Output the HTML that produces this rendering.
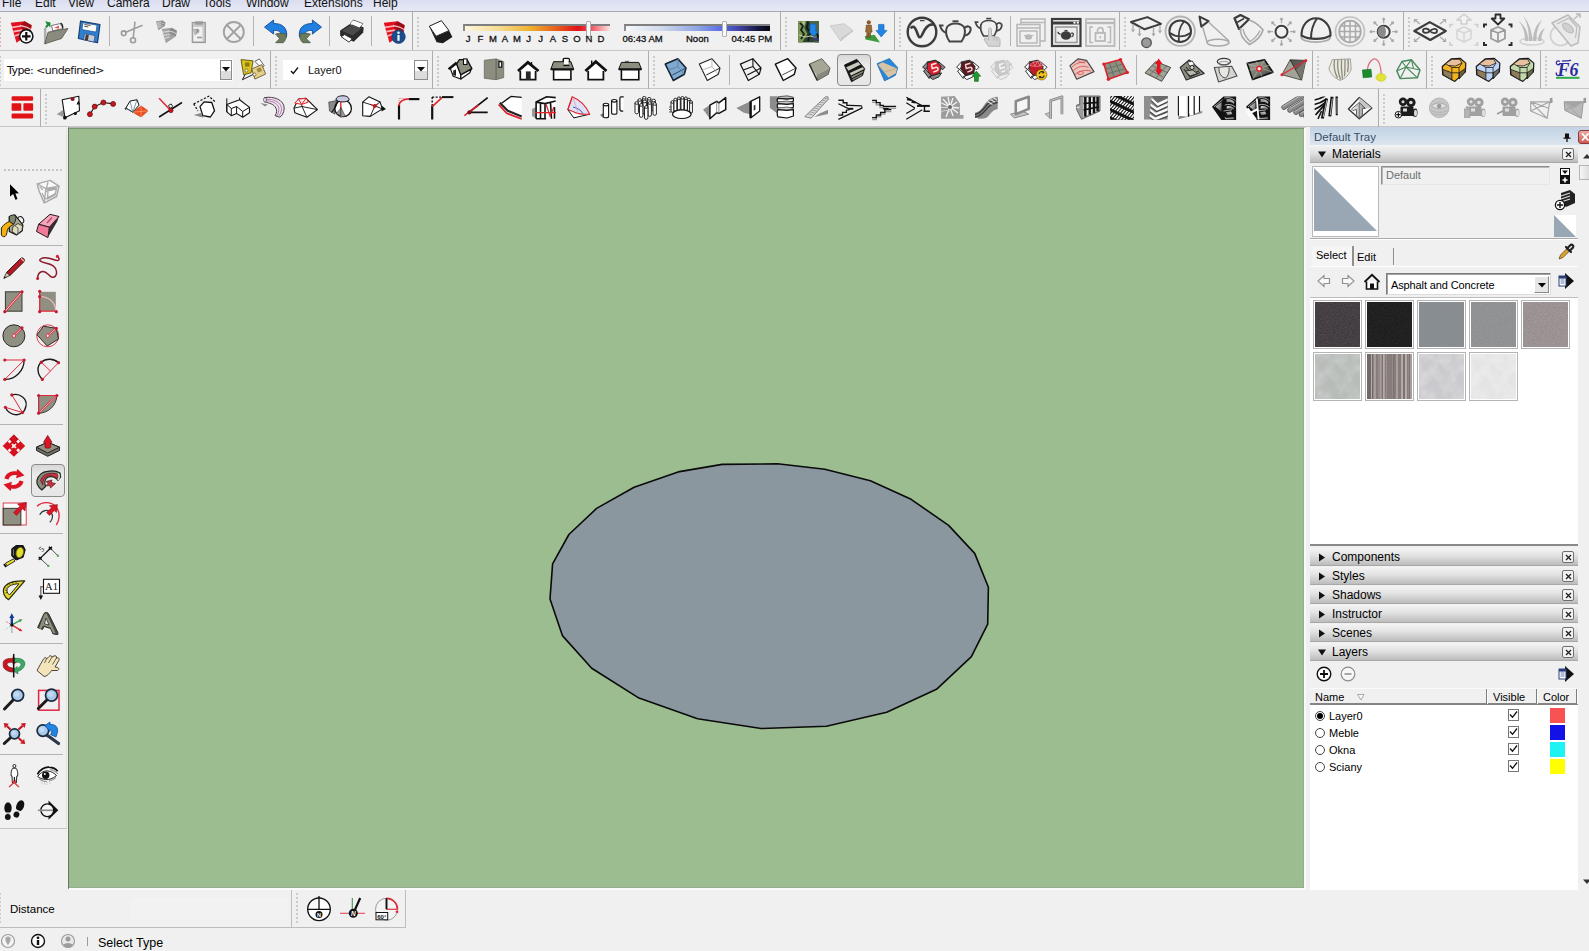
<!DOCTYPE html>
<html lang="en"><head><meta charset="utf-8"><title>SketchUp</title>
<style>
*{box-sizing:border-box;margin:0;padding:0}
html,body{width:1589px;height:951px;overflow:hidden;background:#f0f0f0;font-family:"Liberation Sans",sans-serif;font-size:12px;color:#000}
.abs{position:absolute}
#menubar{position:absolute;left:0;top:0;width:1589px;height:12px;background:linear-gradient(#d9ddef,#e7eaf5);overflow:hidden;border-bottom:1px solid #a4a7b6}
#menubar span{position:absolute;top:-4px;font-size:12px;line-height:15px;color:#111;font-family:"Liberation Sans",sans-serif}
.hl{position:absolute;height:1px;background:#c6c6c6}
.vl{position:absolute;width:1px;background:#adadad}
.sep{position:absolute;width:1px;background:#b4b4b4}
.grip{position:absolute;width:2px;background:repeating-linear-gradient(#cbcbcb 0 2px,transparent 2px 4px)}
.ic{position:absolute;width:24px;height:24px;overflow:visible}
.sel{position:absolute;border:1px solid #8a8a8a;border-radius:4px;background:linear-gradient(#d8d8d8,#ebebeb 35%,#e6e6e6)}
#viewport{position:absolute;left:68px;top:127px;width:1238px;height:763px;background:#9bbd90;border-left:1px solid #65785f;border-top:1px solid #b4b8b2;border-right:2px solid #f9fbf8;border-bottom:2px solid #f9fbf8;box-shadow:inset 0 1px 0 #7b9474,inset -1px -1px 0 #96ae8f}
.tx{position:absolute;white-space:nowrap}

#tray{position:absolute;left:1310px;top:127px;width:279px;height:762px;font-family:"Liberation Sans",sans-serif;font-size:11px}
.tt{font-family:"Liberation Sans",sans-serif}
#traytitle{position:absolute;left:0;top:0;width:279px;height:18px;background:linear-gradient(#c3d3e4,#dbe5ef)}
.hdr{position:absolute;left:0;width:268px;height:18px;background:linear-gradient(#f4f4f4 0%,#e2e2e2 45%,#bcbcbc 100%);border-bottom:1px solid #a8a8a8}
.hdr .t{position:absolute;left:22px;top:1px;font-size:12px;line-height:16px;font-family:"Liberation Sans",sans-serif;letter-spacing:0}
.hdr .x{position:absolute;left:252px;top:3px;width:12px;height:12px;border:1px solid #707070;border-radius:2px;background:#f2f2f2}
.hdr svg{position:absolute}
.sw{position:absolute;width:49px;height:49px;border:1px solid #b4b4b4;padding:1px;background:#fff}

.lay{position:absolute;left:19px;font-size:11px;line-height:13px;font-family:"Liberation Sans",sans-serif}
.rad{position:absolute;left:5px;width:10px;height:10px;border:1px solid #444;border-radius:50%;background:#fff}
.chk{position:absolute;left:198px;width:11px;height:12px;border:1px solid #777;background:#fff}
.col{position:absolute;left:240px;width:15px;height:15px}
</style></head>
<body>
<div id="menubar"><span style="left:2px">File</span><span style="left:35px">Edit</span><span style="left:68px">View</span><span style="left:107px">Camera</span><span style="left:162px">Draw</span><span style="left:203px">Tools</span><span style="left:246px">Window</span><span style="left:304px">Extensions</span><span style="left:373px">Help</span></div>
<div class="hl" style="left:0;top:50px;width:1589px"></div><div class="hl" style="left:0;top:88px;width:1589px"></div><div class="hl" style="left:0;top:126px;width:1589px"></div><div class="vl" style="left:412px;top:12px;height:38px"></div><div class="grip" style="left:417px;top:17px;height:31px"></div><div class="vl" style="left:780px;top:12px;height:38px"></div><div class="grip" style="left:785px;top:17px;height:31px"></div><div class="vl" style="left:894px;top:12px;height:38px"></div><div class="grip" style="left:899px;top:17px;height:31px"></div><div class="vl" style="left:1119px;top:12px;height:38px"></div><div class="grip" style="left:1124px;top:17px;height:31px"></div><div class="vl" style="left:1403px;top:12px;height:38px"></div><div class="grip" style="left:1408px;top:17px;height:31px"></div><div class="vl" style="left:270px;top:51px;height:38px"></div><div class="grip" style="left:275px;top:56px;height:31px"></div><div class="vl" style="left:432px;top:51px;height:38px"></div><div class="grip" style="left:437px;top:56px;height:31px"></div><div class="vl" style="left:648px;top:51px;height:38px"></div><div class="grip" style="left:653px;top:56px;height:31px"></div><div class="vl" style="left:906px;top:51px;height:38px"></div><div class="grip" style="left:911px;top:56px;height:31px"></div><div class="vl" style="left:1055px;top:51px;height:38px"></div><div class="grip" style="left:1060px;top:56px;height:31px"></div><div class="vl" style="left:1312px;top:51px;height:38px"></div><div class="grip" style="left:1317px;top:56px;height:31px"></div><div class="vl" style="left:1426px;top:51px;height:38px"></div><div class="grip" style="left:1431px;top:56px;height:31px"></div><div class="vl" style="left:1540px;top:51px;height:38px"></div><div class="grip" style="left:1545px;top:56px;height:31px"></div><div class="vl" style="left:40px;top:89px;height:38px"></div><div class="grip" style="left:45px;top:94px;height:31px"></div><div class="vl" style="left:1378px;top:89px;height:38px"></div><div class="grip" style="left:1383px;top:94px;height:31px"></div><div class="grip" style="left:0px;top:17px;height:31px;width:1px;background:repeating-linear-gradient(#e0b4b4 0 2px,transparent 2px 4px)"></div><div class="grip" style="left:0px;top:56px;height:31px;width:1px"></div><div class="sep" style="left:109px;top:16px;height:30px"></div><div class="sep" style="left:253px;top:16px;height:30px"></div><div class="sep" style="left:329px;top:16px;height:30px"></div><div class="sep" style="left:371px;top:16px;height:30px"></div><div class="sep" style="left:1010px;top:16px;height:30px"></div><div class="sep" style="left:729px;top:55px;height:30px"></div><div class="sep" style="left:1136px;top:55px;height:30px"></div><div class="abs" style="left:463px;top:24px;width:147px;height:7px;background:linear-gradient(90deg,#fdf6e0 0%,#f6d98a 25%,#eeb22c 45%,#e8641c 62%,#e01018 78%,#f06068 88%,#fbe4e4 100%);border-top:2px solid #7f7f7f;border-left:2px solid #8a8a8a"></div><div class="abs" style="left:586px;top:21px;width:5px;height:16px;background:#fafafa;border:1px solid #b0b0b0;border-radius:1px"></div><span class="tx" style="left:468px;top:33px;width:12px;margin-left:-6px;text-align:center;font-size:9.500px;line-height:11px;color:#111;-webkit-text-stroke:.3px #111">J</span><span class="tx" style="left:480.5px;top:33px;width:12px;margin-left:-6px;text-align:center;font-size:9.500px;line-height:11px;color:#111;-webkit-text-stroke:.3px #111">F</span><span class="tx" style="left:493px;top:33px;width:12px;margin-left:-6px;text-align:center;font-size:9.500px;line-height:11px;color:#111;-webkit-text-stroke:.3px #111">M</span><span class="tx" style="left:505px;top:33px;width:12px;margin-left:-6px;text-align:center;font-size:9.500px;line-height:11px;color:#111;-webkit-text-stroke:.3px #111">A</span><span class="tx" style="left:517px;top:33px;width:12px;margin-left:-6px;text-align:center;font-size:9.500px;line-height:11px;color:#111;-webkit-text-stroke:.3px #111">M</span><span class="tx" style="left:528.5px;top:33px;width:12px;margin-left:-6px;text-align:center;font-size:9.500px;line-height:11px;color:#111;-webkit-text-stroke:.3px #111">J</span><span class="tx" style="left:540.5px;top:33px;width:12px;margin-left:-6px;text-align:center;font-size:9.500px;line-height:11px;color:#111;-webkit-text-stroke:.3px #111">J</span><span class="tx" style="left:553px;top:33px;width:12px;margin-left:-6px;text-align:center;font-size:9.500px;line-height:11px;color:#111;-webkit-text-stroke:.3px #111">A</span><span class="tx" style="left:565px;top:33px;width:12px;margin-left:-6px;text-align:center;font-size:9.500px;line-height:11px;color:#111;-webkit-text-stroke:.3px #111">S</span><span class="tx" style="left:577px;top:33px;width:12px;margin-left:-6px;text-align:center;font-size:9.500px;line-height:11px;color:#111;-webkit-text-stroke:.3px #111">O</span><span class="tx" style="left:589px;top:33px;width:12px;margin-left:-6px;text-align:center;font-size:9.500px;line-height:11px;color:#111;-webkit-text-stroke:.3px #111">N</span><span class="tx" style="left:601px;top:33px;width:12px;margin-left:-6px;text-align:center;font-size:9.500px;line-height:11px;color:#111;-webkit-text-stroke:.3px #111">D</span><div class="abs" style="left:624px;top:24px;width:146px;height:7px;background:linear-gradient(90deg,#f6f8fc 0%,#cfd9ea 25%,#8ea4e4 50%,#5a6fe8 66%,#3c3c9c 80%,#16163c 92%,#050510 100%);border-top:2px solid #7f7f7f;border-left:2px solid #8a8a8a"></div><div class="abs" style="left:722px;top:21px;width:5px;height:16px;background:#fafafa;border:1px solid #b0b0b0;border-radius:1px"></div><span class="tx" style="left:622.5px;top:33px;font-size:9.500px;line-height:11px;color:#111;-webkit-text-stroke:.3px #111">06:43 AM</span><span class="tx" style="left:686px;top:33px;font-size:9.500px;line-height:11px;color:#111;-webkit-text-stroke:.3px #111">Noon</span><span class="tx" style="left:731.5px;top:33px;font-size:9.500px;line-height:11px;color:#111;-webkit-text-stroke:.3px #111">04:45 PM</span><svg class="ic" style="left:9px;top:20px" viewBox="0 0 24 24"><g transform="translate(0,0) scale(1)"><path d="M1.800 2.700L15.600 1.200 22.600 5.300 21.400 13 7.500 22.700z" fill="#e3101f"/><path d="M15.600 1.200L22.600 5.300 21.400 13 14 9.500 11 5.500z" fill="#9c0d18"/><path d="M3 7.300l9-1.300M4.300 11.600l8.500-1.500M5.600 16l7-2.500" stroke="#f6b9bb" stroke-width="1.700" fill="none"/><path d="M11 5.500l6.500 1.500 4.600 2.500" stroke="#f6b9bb" stroke-width="1.300" fill="none"/></g><circle cx="17.300" cy="16.300" r="6.600" fill="#fff" stroke="#111" stroke-width="1.500"/><path d="M17.300 12v8.600M13 16.300h8.600" stroke="#111" stroke-width="2.200"/></svg><svg class="ic" style="left:43px;top:20px" viewBox="0 0 24 24"><path d="M1.400 8.500l1.600-0.500v15.800l-1.600 0z" fill="#b9b9b9" stroke="#8a8a8a" stroke-width=".5"/><path d="M8.500 5.500l9-2 2.300 5-10 2.400z" fill="#fff" stroke="#555" stroke-width=".8"/><path d="M11 8l5-2.500v3z" fill="#e8505a"/><path d="M17.500 3.500c1.500 0 2.300 2.500 2.300 5" stroke="#222" stroke-width="1.300" fill="none"/><path d="M5 12.200L25 8.500 18.500 18.500 1.800 23.800z" fill="#8b8a7e" stroke="#54534a" stroke-width=".8"/><path d="M1.800 1.500l5.500 0.500 0.500 5-2-1.500-1.500 2.500-1.800-1 1.500-2.500z" fill="#1f8a3a" transform="rotate(8 4 4)"/></svg><svg class="ic" style="left:77px;top:20px" viewBox="0 0 24 24"><path d="M3.500 1.200L23 4.500 20.500 22.700 1.400 18.500z" fill="#2f80d3" stroke="#173f73" stroke-width="1.200" stroke-linejoin="round"/><path d="M6 2.800L20 5.200 19 12 5 9.500z" fill="#fff" stroke="#173f73" stroke-width=".6"/><path d="M7.500 4.500l6 1M7.300 6.300l4 .7" stroke="#3b3b3b" stroke-width=".9"/><path d="M7.500 13.500l10.500 2-1 6.500-10.400-2.200z" fill="#c9cbd6" stroke="#173f73" stroke-width=".6"/><path d="M8.800 14.200l3 .6-.9 5.800-3-.6z" fill="#3d3d3d"/></svg><svg class="ic" style="left:119px;top:20px" viewBox="0 0 24 24"><circle cx="4.700" cy="13.200" r="2.300" fill="none" stroke="#9c9c9c" stroke-width="1.600"/><circle cx="14" cy="20.300" r="2.500" fill="none" stroke="#9c9c9c" stroke-width="1.600"/><path d="M6.800 12.300L23.500 5.300M14.200 17.800L16 1.600" stroke="#9c9c9c" stroke-width="1.500" fill="none"/></svg><svg class="ic" style="left:153px;top:20px" viewBox="0 0 24 24"><g transform="translate(2,0) scale(0.46)"><path d="M1.800 2.700L15.600 1.200 22.600 5.300 21.400 13 7.500 22.700z" fill="#a3a3a3"/><path d="M15.600 1.200L22.600 5.300 21.400 13 14 9.500 11 5.500z" fill="#8a8a8a"/><path d="M3 7.300l9-1.300M4.300 11.600l8.500-1.500M5.600 16l7-2.500" stroke="#d9d9d9" stroke-width="1.700" fill="none"/><path d="M11 5.500l6.500 1.500 4.600 2.500" stroke="#d9d9d9" stroke-width="1.300" fill="none"/></g><g transform="translate(7.5,7) scale(0.72)"><path d="M1.800 2.700L15.600 1.200 22.600 5.300 21.400 13 7.500 22.700z" fill="#a3a3a3"/><path d="M15.600 1.200L22.600 5.300 21.400 13 14 9.500 11 5.500z" fill="#8a8a8a"/><path d="M3 7.300l9-1.300M4.300 11.600l8.500-1.500M5.600 16l7-2.500" stroke="#d9d9d9" stroke-width="1.700" fill="none"/><path d="M11 5.500l6.500 1.500 4.600 2.500" stroke="#d9d9d9" stroke-width="1.300" fill="none"/></g></svg><svg class="ic" style="left:187px;top:20px" viewBox="0 0 24 24"><rect x="5.300" y="2.500" width="13" height="20" fill="#c9c9c9" stroke="#9a9a9a" stroke-width="1.200"/><rect x="6.500" y="7" width="9" height="14" fill="#f0f0f0"/><rect x="8" y="1.300" width="8" height="3.400" fill="#9a9a9a"/><g transform="translate(5.5,8.5) scale(0.3)"><path d="M1.800 2.700L15.600 1.200 22.600 5.300 21.400 13 7.500 22.700z" fill="#a3a3a3"/><path d="M15.600 1.200L22.600 5.300 21.400 13 14 9.500 11 5.500z" fill="#8a8a8a"/><path d="M3 7.300l9-1.300M4.300 11.600l8.500-1.500M5.600 16l7-2.500" stroke="#e0e0e0" stroke-width="1.700" fill="none"/><path d="M11 5.500l6.500 1.500 4.600 2.500" stroke="#e0e0e0" stroke-width="1.300" fill="none"/></g><path d="M10 17.500h5" stroke="#9a9a9a" stroke-width="1.600"/></svg><svg class="ic" style="left:221px;top:20px" viewBox="0 0 24 24"><circle cx="12.800" cy="12" r="10" fill="none" stroke="#a2a2a2" stroke-width="1.900"/><path d="M5.800 5L19.800 19M19.800 5L5.800 19" stroke="#a2a2a2" stroke-width="1.900"/></svg><svg class="ic" style="left:264px;top:20px" viewBox="0 0 24 24"><path d="M9.600 0L0.500 7.100 9.600 14.100V10.400C14 10 16.500 11.500 17.500 14.500L22.500 17C24 8 18 3.200 9.600 3.600z" fill="#1f80e2" stroke="#0e4c9c" stroke-width=".9" stroke-linejoin="round"/><path d="M11.600 14.100C15 13 19 13.200 21.500 13.800 23.300 17 21.500 20.500 19.200 22.700L11.600 22.700 15.600 18.700z" fill="#6c7a5c" stroke="#3f4a38" stroke-width=".7"/></svg><svg class="ic" style="left:298px;top:20px" viewBox="0 0 24 24"><g transform="translate(24,0) scale(-1,1)"><path d="M9.600 0L0.500 7.100 9.600 14.100V10.400C14 10 16.500 11.500 17.500 14.500L22.500 17C24 8 18 3.200 9.600 3.600z" fill="#1f80e2" stroke="#0e4c9c" stroke-width=".9" stroke-linejoin="round"/><path d="M11.600 14.100C15 13 19 13.200 21.500 13.800 23.300 17 21.500 20.500 19.200 22.700L11.600 22.700 15.600 18.700z" fill="#6c7a5c" stroke="#3f4a38" stroke-width=".7"/></g></svg><svg class="ic" style="left:339px;top:20px" viewBox="0 0 24 24"><path d="M11.100 4.100L14.200 0 23.700 3.600 20.700 8.100z" fill="#fff" stroke="#333" stroke-width=".8"/><path d="M1.100 10.600L13.200 2.600 24.700 7.600 24.200 12.600 14.700 21.700 1.100 15.700z" fill="#2b2b2b"/><path d="M11.100 4.300L14 0.600 23.200 4 20.500 7.800z" fill="#fff"/><path d="M3 10.800L13 4.500 22.500 8.500 13.500 15.500z" fill="#4a4a4a"/><path d="M2.100 16.700L5.600 14.600 13.200 18.700 10.100 22.200z" fill="#fff" stroke="#222" stroke-width=".9"/></svg><svg class="ic" style="left:382px;top:20px" viewBox="0 0 24 24"><g transform="translate(0,0) scale(1)"><path d="M1.800 2.700L15.600 1.200 22.600 5.300 21.400 13 7.500 22.700z" fill="#e3101f"/><path d="M15.600 1.200L22.600 5.300 21.400 13 14 9.500 11 5.500z" fill="#9c0d18"/><path d="M3 7.300l9-1.300M4.300 11.600l8.500-1.500M5.600 16l7-2.500" stroke="#f6b9bb" stroke-width="1.700" fill="none"/><path d="M11 5.500l6.500 1.500 4.600 2.500" stroke="#f6b9bb" stroke-width="1.300" fill="none"/></g><circle cx="16.500" cy="16.700" r="6.800" fill="#1c4a8c" stroke="#123a6e" stroke-width=".6"/><circle cx="16.500" cy="12.800" r="1.300" fill="#dff"/><path d="M16.500 15v5.800" stroke="#e6ffff" stroke-width="2.200"/></svg><svg class="ic" style="left:429px;top:20px" viewBox="0 0 24 24"><path d="M0.100 6.200L7 16.600 20.200 10.700 23.400 17 13.900 23.200 7.600 22.300z" fill="#1d1d1d"/><path d="M0.300 6.200L12.400 0.700 20 10.600 7.100 16.300z" fill="#fff" stroke="#1d1d1d" stroke-width="1"/></svg><svg class="ic" style="left:796px;top:20px" viewBox="0 0 24 24"><rect x="2.300" y="1" width="20.700" height="21.400" fill="#2f4230"/><path d="M2.300 1h8l-2 7 3 6-5 8.400h-4z" fill="#7c9a52"/><path d="M13 1l3 6-2 8 5 7.400h4V1z" fill="#4d6848"/><path d="M4 3l3 3-2 4 3 4-3 5M12 2l-1 6 3 5-2 8M20 12l2 4-1 5" stroke="#111a14" stroke-width="1.700" fill="none"/><path d="M3 15l6 2 6-1 7 3" stroke="#cfd8c0" stroke-width=".9" fill="none"/><path d="M14 17l5 4h4v-3z" fill="#3a3a6a"/><path d="M6 1.500l3 .5-1 4z" fill="#b8c890"/><path d="M14 4h5.800v7.600h2.700L17.600 16.400 12.800 11.600H14z" fill="#1f86e6" stroke="#1560b0" stroke-width=".6"/></svg><svg class="ic" style="left:830px;top:20px" viewBox="0 0 24 24"><path d="M0.200 5.800L14 3.700 23 10.600 10.600 21z" fill="#d9d9d9" stroke="#c4c4c4" stroke-width=".8"/><path d="M10.600 21l1.500-3 10.900-7.400" fill="none" stroke="#bdbdbd" stroke-width="1"/></svg><svg class="ic" style="left:863px;top:20px" viewBox="0 0 24 24"><path d="M1.800 16.200L11.500 14.800 17 22.400 2.500 19.600z" fill="#3c9a3c"/><circle cx="5.800" cy="2.300" r="2.100" fill="#8a5a2c"/><path d="M3.300 5h5l.8 7-1.300.3-.5 5H5.800l-.2-4-.6 4H3.500l.4-5L2.600 12z" fill="#9a6a34" stroke="#5a3a18" stroke-width=".5"/><path d="M15.500 4.400h5.500v6h3L18.200 16.900 12.900 10.400h2.600z" fill="#1f86e6" stroke="#1560b0" stroke-width=".6"/></svg><svg class="ic" style="left:909px;top:20px" viewBox="0 0 24 24"><circle cx="13" cy="12" r="14.300" fill="none" stroke="#3c3c3c" stroke-width="2.400"/><path d="M2.500 7.500C5 5 7 9 9 15c1 3 2.500 3 4 0 2.500-6 5.500-11.500 11.500-10.500" fill="none" stroke="#3c3c3c" stroke-width="2.600" stroke-linecap="round"/><path d="M11 0.600h4.500" stroke="#3c3c3c" stroke-width="1.300"/></svg><svg class="ic" style="left:943px;top:20px" viewBox="0 0 24 24"><path d="M3.500 8.500C4 5.500 8 3.500 12.500 3.500S21 5.500 21.500 8.500C23 13 20.500 18.500 18.500 21.500H6.500C4.500 18.500 2 13 3.500 8.500z" fill="none" stroke="#444" stroke-width="2"/><path d="M9.500 1.200h6" stroke="#444" stroke-width="1.800"/><path d="M3.500 13C0 12-2 9-3 5.500h3.500" fill="none" stroke="#444" stroke-width="2"/><path d="M21.500 8c3-3 7-1.500 6 2.500-.6 2.500-3 4.500-5.500 5" fill="none" stroke="#444" stroke-width="2"/></svg><svg class="ic" style="left:977px;top:20px" viewBox="0 0 24 24"><g transform="translate(1,-2.500) scale(.86)"><path d="M3.500 8.500C4 5.500 8 3.500 12.500 3.500S21 5.500 21.500 8.500C23 13 20.500 18.500 18.500 21.500H6.500C4.500 18.500 2 13 3.500 8.500z" fill="none" stroke="#444" stroke-width="2"/><path d="M9.500 1.200h6" stroke="#444" stroke-width="1.800"/><path d="M3.500 13C0 12-2 9-3 5.500h3.500" fill="none" stroke="#444" stroke-width="2"/><path d="M21.500 8c3-3 7-1.500 6 2.500-.6 2.500-3 4.500-5.500 5" fill="none" stroke="#444" stroke-width="2"/></g><path d="M11.500 9.500c0-2 3-2 3 0v6.500l6 1.200c2 .4 2.500 1.500 2.500 3.500v5.500h-11.500l-4-6c-1-1.800.8-3 2.200-1.800l1.800 1.800z" fill="#d4d4d4" stroke="#b4b4b4" stroke-width="1"/><path d="M17 16.500v4M20 17.200v3.600" stroke="#b4b4b4" stroke-width="1"/></svg><svg class="ic" style="left:1020px;top:20px" viewBox="0 0 24 24"><rect x="1" y="-1" width="24" height="22" fill="#f0f0f0" stroke="#b9b9b9" stroke-width="1.600"/><path d="M1 2.500h24" stroke="#b9b9b9" stroke-width="1.500"/><rect x="-3" y="4.500" width="23" height="21.500" fill="#f0f0f0" stroke="#b9b9b9" stroke-width="1.600"/><path d="M-3 8h23" stroke="#b9b9b9" stroke-width="1.600"/><rect x="0" y="11" width="17" height="12" fill="none" stroke="#b9b9b9" stroke-width="1.500"/><ellipse cx="8.500" cy="17" rx="3.600" ry="2.800" fill="#b9b9b9"/><path d="M4 15.500h9.500" stroke="#b9b9b9" stroke-width="1"/></svg><svg class="ic" style="left:1054px;top:20px" viewBox="0 0 24 24"><rect x="-2" y="-1" width="28.500" height="27" fill="#f0f0f0" stroke="#3c3c3c" stroke-width="2.200"/><path d="M-2 3h28.500" stroke="#3c3c3c" stroke-width="3"/><rect x="1.500" y="7" width="21.500" height="15.500" fill="#ededed" stroke="#9a9a9a" stroke-width="1.600"/><ellipse cx="12" cy="15.500" rx="5.200" ry="4.200" fill="#3c3c3c"/><path d="M6.500 14c-1.500 0-2.500-1-2.500-2.200M17 13.500c2.500-1.500 3.500 2 0.500 3.500" stroke="#3c3c3c" stroke-width="1.300" fill="none"/><path d="M10.500 10.600h3" stroke="#3c3c3c" stroke-width="1.300"/><rect x="19.500" y="1.800" width="2" height="1.800" fill="#fff"/><rect x="22.800" y="1.800" width="2" height="1.800" fill="#fff"/></svg><svg class="ic" style="left:1088px;top:20px" viewBox="0 0 24 24"><rect x="-2" y="-1" width="28.500" height="27" fill="#f0f0f0" stroke="#b9b9b9" stroke-width="1.800"/><path d="M-2 3h28.500" stroke="#b9b9b9" stroke-width="2.400"/><path d="M5 7H2v15.500h3M19.500 7h3v15.500h-3" fill="none" stroke="#b9b9b9" stroke-width="1.500"/><rect x="7.500" y="13" width="9.500" height="8" fill="none" stroke="#b9b9b9" stroke-width="1.800"/><path d="M9.500 13v-2.500a2.800 2.800 0 015.600 0V13" fill="none" stroke="#b9b9b9" stroke-width="1.700"/><path d="M12.300 16v2.500" stroke="#b9b9b9" stroke-width="1.500"/></svg><svg class="ic" style="left:1133px;top:20px" viewBox="0 0 24 24"><path d="M-2 2L14.400 -2.900 28 3.900 11.600 9.300z" fill="none" stroke="#3c3c3c" stroke-width="2" stroke-linejoin="round"/><path d="M0 4v7M6.500 7v8M20.500 7v8M27 5v7" stroke="#a9a9a9" stroke-width="1.300"/><path d="M-1.500 9.500l1.500 2 1.500-2M5 13.500l1.500 2 1.500-2M19 13.500l1.500 2 1.500-2M25.500 10.500l1.500 2 1.500-2" fill="none" stroke="#a9a9a9" stroke-width="1.200"/><circle cx="13.500" cy="22.700" r="4.800" fill="#9a9a9a" stroke="#555" stroke-width="1.300"/></svg><svg class="ic" style="left:1168px;top:20px" viewBox="0 0 24 24"><circle cx="12.200" cy="11.200" r="14.700" fill="none" stroke="#b4b4b4" stroke-width="1.900"/><circle cx="12.200" cy="11.200" r="10.800" fill="none" stroke="#3c3c3c" stroke-width="2"/><path d="M16 1.500C12 6 10 14 11 22M2 13c6 4.500 14 4.500 20.500 0" fill="none" stroke="#3c3c3c" stroke-width="1.800"/></svg><svg class="ic" style="left:1201px;top:20px" viewBox="0 0 24 24"><path d="M-1.500 -3.400L7.600 1.100 0.300 6.600z" fill="none" stroke="#3c3c3c" stroke-width="2" stroke-linejoin="round"/><path d="M1.500 6.500L6 22M7.500 2L28 21" stroke="#a9a9a9" stroke-width="1.400" fill="none"/><ellipse cx="17" cy="22.600" rx="11" ry="3.300" fill="none" stroke="#a9a9a9" stroke-width="1.500"/></svg><svg class="ic" style="left:1235px;top:20px" viewBox="0 0 24 24"><path d="M-0.500 -1.700L5.500 -5 14 -0.700 4 9z" fill="none" stroke="#3c3c3c" stroke-width="2.200" stroke-linejoin="round"/><path d="M2 2.500l7-4" stroke="#3c3c3c" stroke-width="1.600"/><path d="M5.500 8c-1 6 3 12 9 16.500 6-3 11.500-8 13.500-14.500C24 5 19 1.500 14 0" fill="none" stroke="#a9a9a9" stroke-width="1.700"/><path d="M8 9c1 5 4 9.500 7 12.500 4-2.500 8-6.500 10-11" fill="none" stroke="#a9a9a9" stroke-width="1.300"/></svg><svg class="ic" style="left:1270px;top:20px" viewBox="0 0 24 24"><path d="M20.0 11.7L25.5 11.7M25.5 11.7L23.2 12.9M25.5 11.7L23.2 10.5M17.5 17.7L21.4 21.6M21.4 21.6L18.9 20.9M21.4 21.6L20.7 19.1M11.5 20.2L11.5 25.7M11.5 25.7L10.3 23.4M11.5 25.7L12.7 23.4M5.5 17.7L1.6 21.6M1.6 21.6L2.3 19.1M1.6 21.6L4.1 20.9M3.0 11.7L-2.5 11.7M-2.5 11.7L-0.2 10.5M-2.5 11.7L-0.2 12.9M5.5 5.7L1.6 1.8M1.6 1.8L4.1 2.5M1.6 1.8L2.3 4.3M11.5 3.2L11.5 -2.3M11.5 -2.3L12.7 -0.0M11.5 -2.3L10.3 -0.0M17.5 5.7L21.4 1.8M21.4 1.8L20.7 4.3M21.4 1.8L18.9 2.5" stroke="#a9a9a9" stroke-width="1.3" fill="none"/><circle cx="11.500" cy="11.700" r="6" fill="none" stroke="#3c3c3c" stroke-width="2"/></svg><svg class="ic" style="left:1303px;top:20px" viewBox="0 0 24 24"><ellipse cx="12.800" cy="17.500" rx="14.500" ry="4.600" fill="none" stroke="#a9a9a9" stroke-width="1.700"/><path d="M-1.500 15.500C-1.500 5 5 -1.800 13 -1.800S28 6 27.500 15.500C20 20 6 20 -1.500 15.500z" fill="#f0f0f0" stroke="#3c3c3c" stroke-width="2.100"/><path d="M14 -1.500C10 4 8 11 8 18.500" fill="none" stroke="#3c3c3c" stroke-width="2"/></svg><svg class="ic" style="left:1337px;top:20px" viewBox="0 0 24 24"><circle cx="13" cy="11.500" r="14.500" fill="none" stroke="#c0c0c0" stroke-width="1.700"/><circle cx="13" cy="11.500" r="10.800" fill="none" stroke="#a9a9a9" stroke-width="1.800"/><path d="M13 .7v21.600M7.500 2.200v18.600M18.500 2.200v18.600M2.200 11.500h21.600M3.700 6h18.600M3.700 17h18.600" stroke="#a9a9a9" stroke-width="1.500"/></svg><svg class="ic" style="left:1372px;top:20px" viewBox="0 0 24 24"><path d="M20.2 11.7L25.7 11.7M25.7 11.7L23.4 12.9M25.7 11.7L23.4 10.5M17.7 17.7L21.6 21.6M21.6 21.6L19.1 20.9M21.6 21.6L20.9 19.1M11.7 20.2L11.7 25.7M11.7 25.7L10.5 23.4M11.7 25.7L12.9 23.4M5.7 17.7L1.8 21.6M1.8 21.6L2.5 19.1M1.8 21.6L4.3 20.9M3.2 11.7L-2.3 11.7M-2.3 11.7L-0.0 10.5M-2.3 11.7L-0.0 12.9M5.7 5.7L1.8 1.8M1.8 1.8L4.3 2.5M1.8 1.8L2.5 4.3M11.7 3.2L11.7 -2.3M11.7 -2.3L12.9 -0.0M11.7 -2.3L10.5 -0.0M17.7 5.7L21.6 1.8M21.6 1.8L20.9 4.3M21.6 1.8L19.1 2.5" stroke="#a9a9a9" stroke-width="1.3" fill="none"/><circle cx="11.700" cy="11.700" r="6" fill="#f0f0f0" stroke="#3c3c3c" stroke-width="2"/><path d="M11.700 5.700a6 6 0 000 12a9 9 0 000-12z" fill="#8a8a8a"/></svg><svg class="ic" style="left:1418px;top:20px" viewBox="0 0 24 24"><path d="M-3 0l5 4M27 0l-5 4M-3 21l5-4M27 21l-5-4" stroke="#a9a9a9" stroke-width="1.300"/><path d="M-3.500 2.500V-.5h3M24.500 -.5h3v3M-3.500 18.500v3h3M24.500 21.500h3v-3" fill="none" stroke="#a9a9a9" stroke-width="1.200"/><path d="M-3.700 11L11.700 2.100 27.800 11 12.300 20z" fill="#f0f0f0" stroke="#3c3c3c" stroke-width="2.200" stroke-linejoin="round"/><path d="M12 11c-2.500-3.500-7-3-7-.3s4.500 2.800 7 .3 7-3.200 7-.2-4.500 3.200-7 .2z" fill="none" stroke="#3c3c3c" stroke-width="1.800"/></svg><svg class="ic" style="left:1452px;top:20px" viewBox="0 0 24 24"><path d="M-2 3.7v3.8M-2 4.5h3 M25.5 3.7v3.8M25.5 4.5h-3 M-2 25.8v-3.8M-2 25h3 M25.5 25.8v-3.8M25.5 25h-3" stroke="#cdcdcd" stroke-width="1.6" fill="none"/><path d="M5 10l7-3 7 3v8.500l-7 3.500-7-3.500z M5 10l7 3 7-3M12 13v9" fill="none" stroke="#d6d6d6" stroke-width="1.6" stroke-linejoin="round"/><path d="M12 -6L5 0h4.200v4h5.600V0H19z" fill="#f4f4f4" stroke="#cdcdcd" stroke-width="1.500" stroke-linejoin="round"/></svg><svg class="ic" style="left:1486px;top:20px" viewBox="0 0 24 24"><path d="M-2 3.5v4.0M-2 4.5h3 M25.5 3.5v4.0M25.5 4.5h-3 M-2 26.0v-4.0M-2 25h3 M25.5 26.0v-4.0M25.5 25h-3" stroke="#2c2c2c" stroke-width="2" fill="none"/><path d="M5 10l7-3 7 3v8.500l-7 3.500-7-3.500z M5 10l7 3 7-3M12 13v9" fill="none" stroke="#9c9c9c" stroke-width="1.8" stroke-linejoin="round"/><path d="M9.500 -5.500h5v4h3.800L12 4.500 5.700 -1.500H9.500z" fill="#f0f0f0" stroke="#2c2c2c" stroke-width="1.800" stroke-linejoin="round"/></svg><svg class="ic" style="left:1520px;top:20px" viewBox="0 0 24 24"><ellipse cx="12" cy="21.500" rx="12" ry="3.500" fill="none" stroke="#d2d2d2" stroke-width="1.500"/><path d="M5 21C5 12 3 5 -2 1 4 4 8 11 8.500 21zM9 21C9 10 7 1 3-4c5 4 9 14 9.500 25zM13 21c0-9 3-17 9-21-4 6-6 13-5.500 21zM18 21c0-6 3-11 7-13-2.500 4-4 8-3.500 13z" fill="#bcbcbc"/></svg><svg class="ic" style="left:1554px;top:20px" viewBox="0 0 24 24"><circle cx="6.500" cy="15.500" r="10" fill="none" stroke="#d0d0d0" stroke-width="1.600"/><path d="M-2 3L14 -5 26 7 24 23 17 26z" fill="#e9e9e9" stroke="#bcbcbc" stroke-width="1.600" stroke-linejoin="round"/><path d="M3 4l12-6 8 9-1.500 11" fill="none" stroke="#bcbcbc" stroke-width="1.200"/><ellipse cx="14" cy="8" rx="6.500" ry="3.500" transform="rotate(40 14 8)" fill="#d0d0d0" stroke="#bcbcbc"/><path d="M20 -1l6-5M22 -6h4v4" fill="none" stroke="#bcbcbc" stroke-width="1.500"/></svg><div class="abs" style="left:4px;top:59px;width:229px;height:22px;background:#fff"></div><span class="tx" style="left:7px;top:64px;font-family:'DejaVu Sans','Liberation Sans',sans-serif;font-size:11px;line-height:13px;letter-spacing:-.55px;color:#111">Type: &lt;undefined&gt;</span><div class="abs" style="left:220px;top:60px;width:12px;height:20px;border:1px solid #8c8c8c;background:linear-gradient(#fff 0 55%,#dcdcdc 55% 100%)"><svg class="abs" style="left:1px;top:6px" width="8" height="5" viewBox="0 0 8 5"><path d="M0 0h8L4 4.500z" fill="#111"/></svg></div><div class="abs" style="left:283px;top:60px;width:145px;height:20px;background:#fff"></div><svg class="abs" style="left:290px;top:66px" width="9" height="9" viewBox="0 0 9 9"><path d="M1 5l2.300 2.500L8 1.500" stroke="#111" stroke-width="1.300" fill="none"/></svg><span class="tx" style="left:308px;top:64px;font-size:11px;line-height:13px;color:#111">Layer0</span><div class="abs" style="left:414px;top:60px;width:14px;height:20px;border:1px solid #8c8c8c;background:linear-gradient(#fff 0 55%,#dcdcdc 55% 100%)"><svg class="abs" style="left:2px;top:6px" width="8" height="5" viewBox="0 0 8 5"><path d="M0 0h8L4 4.500z" fill="#111"/></svg></div><div class="sel" style="left:837px;top:54px;width:34px;height:32px"></div><svg class="ic" style="left:241px;top:58px" viewBox="0 0 24 24"><path d="M1.300 21.800L6 13M1.300 21.800L15 15" stroke="#222" stroke-width="1" fill="none"/><path d="M13.900 3.400L18.300 .9 23.300 7.800 20.200 9.700z" fill="#fff" stroke="#444" stroke-width=".8"/><path d="M0 1.600L12 2.800 10.100 14.800 2.600 16.700z" fill="#dcc41e" stroke="#5a4e10" stroke-width=".9"/><rect x="4" y="4.500" width="4.500" height="4" fill="#8a7a10"/><circle cx="5.500" cy="12.500" r="1.500" fill="#fff" stroke="#5a4e10" stroke-width=".7"/><path d="M10.700 11L20.800 6.600 24.600 16 13.900 21.100z" fill="#e6cf8c" stroke="#6a5a2a" stroke-width=".9"/><rect x="16" y="10" width="4.500" height="4" fill="#a08a40" transform="rotate(-22 18 12)"/><circle cx="13.500" cy="16.500" r="1.500" fill="#fff" stroke="#5a4e10" stroke-width=".7"/></svg><svg class="ic" style="left:448px;top:58px" viewBox="0 0 24 24"><path d="M2.400 10.600L8.600 5.800 12.800 16.200 12.800 21 5.200 18.200z" fill="#fff" stroke="#111" stroke-width="1.200" stroke-linejoin="round"/><path d="M12.800 16.200L23.200 11.300 21.800 14.800 12.800 21z" fill="#fff" stroke="#111" stroke-width="1.200" stroke-linejoin="round"/><path d="M8.600 5.800L11.400 1.600 19 1.600 23.900 10.600 12.800 16.900z" fill="#8d8d80" stroke="#111" stroke-width="1.300" stroke-linejoin="round"/><path d="M0.500 11.200L8.600 4.500" stroke="#111" stroke-width="2.200"/><rect x="15.500" y=".9" width="3.500" height="5.600" fill="#fff" stroke="#111" stroke-width="1.100"/><path d="M5.200 12.500l2.800-1v6.500l-2.800-1z" fill="#222"/></svg><svg class="ic" style="left:482px;top:58px" viewBox="0 0 24 24"><path d="M2.300 2.300L14.100 .9 21.700 3.700 21.700 19.600 14.100 21.700 2.300 20.300z" fill="#8d8d80" stroke="#6a6a60" stroke-width=".8"/><path d="M14.100 .9v20.800" stroke="#5f5f55" stroke-width=".9"/><rect x="16.900" y="3.700" width="2.800" height="5.500" fill="#fff" stroke="#111" stroke-width="1.200"/></svg><svg class="ic" style="left:516px;top:58px" viewBox="0 0 24 24"><path d="M4.300 12v9.700h15.300V12" fill="#fff" stroke="#111" stroke-width="1.800"/><path d="M2 13L11.900 4.400 22.500 13" fill="#fff" stroke="#111" stroke-width="2.800" stroke-linejoin="miter"/><rect x="9.900" y="13.400" width="4.800" height="8.300" fill="#2a2a2a"/><path d="M15.500 4v3" stroke="#111" stroke-width="1.400"/></svg><svg class="ic" style="left:550px;top:58px" viewBox="0 0 24 24"><rect x="13.300" y=".5" width="6" height="7" fill="#fff" stroke="#111" stroke-width="1.600" rx="1"/><rect x="3.600" y="11.500" width="17.300" height="10.200" fill="#fff" stroke="#111" stroke-width="1.600"/><path d="M3.600 3.700h17.300L23.700 11.300H0.800z" fill="#8d8d80" stroke="#111" stroke-width="1"/><rect x="14" y="1.200" width="4.600" height="5.200" fill="#fff"/><path d="M13.300 7.500h6" stroke="#111" stroke-width="1.300"/><path d="M0.800 11.300h22.900" stroke="#111" stroke-width="2"/></svg><svg class="ic" style="left:584px;top:58px" viewBox="0 0 24 24"><path d="M4.200 12v9.700h15.200V12" fill="#fff" stroke="#111" stroke-width="1.800"/><path d="M1.400 13L11.800 3.700 22.500 13" fill="#fff" stroke="#111" stroke-width="2.800"/><path d="M7.700 2.500v5" stroke="#111" stroke-width="1.400"/></svg><svg class="ic" style="left:618px;top:58px" viewBox="0 0 24 24"><rect x="6.900" y="2.800" width="4.100" height="2" fill="#777"/><rect x="3.400" y="11.500" width="17.400" height="10.200" fill="#fff" stroke="#111" stroke-width="1.600"/><path d="M3.400 4.400h17.400L23.500 11.300H0.700z" fill="#8d8d80" stroke="#111" stroke-width="1"/><path d="M0.700 11.300h22.800" stroke="#111" stroke-width="2"/></svg><svg class="ic" style="left:664px;top:58px" viewBox="0 0 24 24"><path d="M1.300 6.100L13.800 .700 22 10 20.300 16.300 9.300 22.500z" fill="#7fa9cf" stroke="#16222e" stroke-width="1.600" stroke-linejoin="round"/><path d="M8.300 17L22 10" stroke="#2f4a66" stroke-width="1" fill="none"/><path d="M13.800 .700L14 8.600L20.300 16.300M14 8.600L4.200 12" stroke="#5a82a8" stroke-width=".9" fill="none"/></svg><svg class="ic" style="left:698px;top:58px" viewBox="0 0 24 24"><path d="M1.300 6.100L13.800 .700 22 10 20.300 16.300 9.300 22.500z" fill="#fff" stroke="#222" stroke-width="1.100" stroke-linejoin="round"/><path d="M8.300 17L22 10" stroke="#222" stroke-width="1" fill="none"/><path d="M13.800 .700L14 8.600L20.300 16.300M14 8.600L4.200 12" stroke="#a8a8a8" stroke-width=".8" fill="none"/></svg><svg class="ic" style="left:739px;top:58px" viewBox="0 0 24 24"><path d="M1.300 6.100L13.800 .700 22 10 20.300 16.300 9.300 22.500z" fill="none" stroke="#111" stroke-width="1.200" stroke-linejoin="round"/><path d="M8.300 17L22 10" stroke="#111" stroke-width="1.100" fill="none"/><path d="M13.800 .700L14 8.600L20.300 16.300M14 8.600L4.200 12" stroke="#111" stroke-width="1.100" fill="none"/></svg><svg class="ic" style="left:774px;top:58px" viewBox="0 0 24 24"><path d="M1.300 6.100L13.800 .700 22 10 20.300 16.300 9.300 22.500z" fill="#fff" stroke="#111" stroke-width="1.400" stroke-linejoin="round"/><path d="M8.300 17L22 10" stroke="#333" stroke-width=".9" fill="none"/></svg><svg class="ic" style="left:808px;top:58px" viewBox="0 0 24 24"><path d="M1.300 6.100L13.800 .700 22 10 8.300 17z" fill="#a6a695"/><path d="M8.300 17L22 10 20.300 16.300 9.300 22.500z" fill="#88887b"/><path d="M1.300 6.100L13.800 .700 22 10 20.300 16.300 9.300 22.500z" fill="none" stroke="#55554a" stroke-width=".9" stroke-linejoin="round"/><path d="M1.300 6.100L9.300 22.500" stroke="#2f2f28" stroke-width="1.500"/></svg><svg class="ic" style="left:842px;top:58px" viewBox="0 0 24 24"><path d="M2.400 7.100L14.800 1.300 22.700 10.600 20.500 17.600 9.500 23.800z" fill="#161616" stroke="#111" stroke-width=".8" stroke-linejoin="round"/><path d="M4.200 9.300L16.100 4 18.700 6.600 6.400 12.800z" fill="#c9c9bd"/><path d="M7.700 15L20.500 9.300 22.300 11 9 17.600z" fill="#c9c9bd"/><path d="M9.300 18.600l12-5.800-.6 2-10.800 5.400zM10 21.200l10.300-5.300-.5 1.500-9.300 4.900z" fill="#8a8a7e"/></svg><svg class="ic" style="left:876px;top:58px" viewBox="0 0 24 24"><path d="M1 5.700L13.400 .500 21.800 9.700 19.500 17.200 8.500 22.900z" fill="#2a86d8" stroke="#2468a8" stroke-width=".7" stroke-linejoin="round"/><path d="M2 6.800L6.500 4.200 21 10.500 19.800 15.500 12.500 19.800 8 14z" fill="#d6c4a4"/><path d="M8 14L21 10.500" stroke="#b8a888" stroke-width=".8"/><path d="M12.500 19.800l7.300-4.300-.8 2.200-8.500 4.500z" fill="#2f7cc4"/></svg><svg class="ic" style="left:922px;top:58px" viewBox="0 0 24 24"><path d="M.600 9.200L5.500 3.900 8.100 5.700 3.700 11.400zM5.500 3.900L13.400 2.200 17.400 4.400 9 6.500zM17.400 4.400L23.100 9.200 20.400 11.900 16 7.500zM3.700 11.400L1.500 13 7.200 20.500 9.400 17.600zM7.200 18.500L19.600 14.900 16.900 18.900 10.700 21.600z" fill="#8a8a8a" stroke="#1c1c1c" stroke-width=".9" stroke-linejoin="round"/><path d="M5.500 4.800L13.400 2.600 19.100 8.300 17.800 14.900 9.400 17.600 5 11z" fill="#d8202e" stroke="#1c1c1c" stroke-width=".8" stroke-linejoin="round"/><path d="M9 6.800l5.500-1.500M9.500 7l.8 3.500 4-1.200c2 0 2.500 2.500.5 3.500l-3.500 1.300" fill="none" stroke="#ffe4e4" stroke-width="1.500"/></svg><svg class="ic" style="left:956px;top:58px" viewBox="0 0 24 24"><path d="M.600 9.200L5.500 3.900 8.100 5.700 3.700 11.400zM5.500 3.900L13.400 2.200 17.400 4.400 9 6.500zM17.400 4.400L23.100 9.200 20.400 11.900 16 7.500zM3.700 11.400L1.500 13 7.200 20.500 9.400 17.600zM7.200 18.500L19.600 14.900 16.900 18.900 10.700 21.600z" fill="#fdfdfd" stroke="#222" stroke-width=".9" stroke-linejoin="round"/><path d="M5.500 4.800L13.400 2.600 19.100 8.300 17.800 14.900 9.400 17.600 5 11z" fill="#5e1a20" stroke="#222" stroke-width=".8" stroke-linejoin="round"/><path d="M9 6.800l5.500-1.500M9.500 7l.8 3.500 4-1.200c2 0 2.500 2.500.5 3.500l-3.500 1.300" fill="none" stroke="#f0d0d0" stroke-width="1.500"/><path d="M20.400 13.200l4.200 5h-2.300v5.100h-3.800v-5.100h-2.300z" fill="#1e9a2e" stroke="#0f6a1c" stroke-width=".7"/></svg><svg class="ic" style="left:990px;top:58px" viewBox="0 0 24 24"><path d="M.600 9.200L5.500 3.900 8.100 5.700 3.700 11.400zM5.500 3.900L13.400 2.200 17.400 4.400 9 6.500zM17.400 4.400L23.100 9.200 20.400 11.900 16 7.500zM3.700 11.400L1.500 13 7.200 20.500 9.400 17.600zM7.200 18.500L19.600 14.900 16.900 18.900 10.700 21.600z" fill="#ececec" stroke="#c2c2c2" stroke-width=".9" stroke-linejoin="round"/><path d="M5.500 4.800L13.400 2.600 19.100 8.300 17.800 14.900 9.400 17.600 5 11z" fill="#c9c9c9" stroke="#c2c2c2" stroke-width=".8" stroke-linejoin="round"/><path d="M9 6.800l5.500-1.500M9.500 7l.8 3.500 4-1.200c2 0 2.500 2.500.5 3.500l-3.500 1.300" fill="none" stroke="#f4f4f4" stroke-width="1.500"/><path d="M17 2l5 4.500h-2.500v6.500h-4V6.500H13z" fill="#d6d6d6" stroke="#c0c0c0" stroke-width=".7"/></svg><svg class="ic" style="left:1024px;top:58px" viewBox="0 0 24 24"><path d="M.600 9.200L5.500 3.900 8.100 5.700 3.700 11.400zM5.500 3.900L13.400 2.200 17.400 4.400 9 6.500zM17.400 4.400L23.100 9.200 20.400 11.900 16 7.500zM3.700 11.400L1.500 13 7.200 20.500 9.400 17.600zM7.200 18.500L19.600 14.900 16.900 18.900 10.700 21.600z" fill="#fdfdfd" stroke="#222" stroke-width=".9" stroke-linejoin="round"/><path d="M5.500 4.800L13.400 2.600 19.100 8.300 17.800 14.900 9.400 17.600 5 11z" fill="#c01c28" stroke="#222" stroke-width=".8" stroke-linejoin="round"/><path d="M6 7.500L9 4.200l7-1.200 3 4.500M9 4.200L11 8l2.500-4.500L16 8l.5-4.500" fill="none" stroke="#f08a90" stroke-width=".8"/><path d="M6 7.500L12.500 8.500 19 7.500" stroke="#f08a90" stroke-width=".8" fill="none"/><circle cx="17.600" cy="16.700" r="5.300" fill="#f2c21c" stroke="#8a6a0c" stroke-width=".7"/><path d="M15 16a2.700 2.700 0 014.800-1.300M20.200 17.500a2.700 2.700 0 01-4.800 1.200" fill="none" stroke="#222" stroke-width="1.200"/><path d="M20.100 12.900v2.400h-2.400zM15.100 20.500v-2.400h2.400z" fill="#222"/></svg><svg class="ic" style="left:1069px;top:58px" viewBox="0 0 24 24"><path d="M.900 7.600L9.200 .800 17.500 2.300 25 13.600 7.700 21.200z" fill="#edc4bc" stroke="#4a4a4a" stroke-width="1.200" stroke-linejoin="round"/><path d="M3 9c4-4 9-5.500 13-4M4.500 12.500c4-4 10-5.500 15-3M6 16.500c4-3.500 10-5 16-3.500M9 2.500c2 2 5 2.500 8 1" fill="none" stroke="#d8505a" stroke-width=".9"/><ellipse cx="11.500" cy="15" rx="3" ry="1.500" fill="none" stroke="#d8505a" stroke-width=".8"/></svg><svg class="ic" style="left:1103px;top:58px" viewBox="0 0 24 24"><path d="M.900 6.100L17.500 1.600 24.300 14.400 5.400 21.200z" fill="#8f8f84" stroke="#e02028" stroke-width="1.600" stroke-linejoin="round"/><path d="M6.400 4.600l5 15M12 3.100l6 14M2.500 11l17.500-5M4 16l18.500-5.500" stroke="#5f6f5f" stroke-width=".9" fill="none"/><circle cx=".900" cy="6.100" r="1.700" fill="#e02028"/><circle cx="17.500" cy="1.600" r="1.700" fill="#e02028"/><circle cx="24.300" cy="14.400" r="1.700" fill="#e02028"/><circle cx="5.400" cy="21.200" r="1.700" fill="#e02028"/></svg><svg class="ic" style="left:1146px;top:58px" viewBox="0 0 24 24"><path d="M-1 14.900L9.700 3.600 24.700 9.500 15.700 23.300z" fill="#a2a298" stroke="#4a4a44" stroke-width="1" stroke-linejoin="round"/><path d="M2.500 11.200l14.800 8M6 7.500l15 7M4 17l11-12M10 20l11-12.500" stroke="#5f6a5f" stroke-width=".8" fill="none"/><path d="M12.700 .6L16.500 6h-2v5.500h2l-3.800 5.800L9 11.500h2V6H9z" fill="#e8101c"/></svg><svg class="ic" style="left:1180px;top:58px" viewBox="0 0 24 24"><path d="M.200 9.500L9.200 1.800 24.200 15.500 6.200 22.100z" fill="#8b8b80" stroke="#2a2a2a" stroke-width="1.100" stroke-linejoin="round"/><path d="M4 11l6 8 10-4.500M6 9l6 7 7-3" fill="none" stroke="#2f2f2f" stroke-width="1.100"/><path d="M5.500 13l7-1 5 3.500-7.500 2.500z" fill="#b8b8ac" stroke="#2a2a2a" stroke-width=".9"/><path d="M7.400 4.200L12.200 3 14.600 6.600 9.800 8.300z" fill="#fff" stroke="#2a2a2a" stroke-width=".9"/><circle cx="12" cy="9.500" r="2" fill="#ddd" stroke="#222" stroke-width="1"/></svg><svg class="ic" style="left:1214px;top:58px" viewBox="0 0 24 24"><path d="M.300 9.500L17.700 8.300 23 17.900 4.500 23.900z" fill="#d4d4d0" stroke="#4a4a4a" stroke-width="1.100" stroke-linejoin="round"/><path d="M5 10c-.5 5 2.500 9.500 6.500 10 3-2 4-6.500 3.500-10.500" fill="#e6e6e2" stroke="#4a4a4a" stroke-width="1"/><ellipse cx="9.900" cy="3.600" rx="6.600" ry="3.300" fill="none" stroke="#3a3a3a" stroke-width="1.300"/><ellipse cx="9.900" cy="5.400" rx="5.400" ry="2" fill="none" stroke="#8a8a8a" stroke-width=".8"/></svg><svg class="ic" style="left:1248px;top:58px" viewBox="0 0 24 24"><defs><linearGradient id="gs6" x1="0" y1="0" x2="1" y2="1"><stop offset="0" stop-color="#a4a498"/><stop offset=".55" stop-color="#77776c"/><stop offset="1" stop-color="#1e1e1e"/></linearGradient></defs><path d="M-.800 5.400L16.500 1.800 24.900 14.300 4.600 21.500z" fill="url(#gs6)" stroke="#111" stroke-width="1.600" stroke-linejoin="round"/><path d="M-.800 5.400L24.900 14.300M16.500 1.800L4.600 21.500M8 3.500l6 15M1.500 12l21-5" stroke="#b8b8ac" stroke-width=".6" fill="none"/><circle cx="11.200" cy="10.700" r="2.400" fill="#fbe6e6" stroke="#e8202c" stroke-width="1.400"/></svg><svg class="ic" style="left:1282px;top:58px" viewBox="0 0 24 24"><path d="M-.100 16.700L8.200 1.800 19.600 22.100z" fill="#a2a296" stroke="#3a3a36" stroke-width=".8" stroke-linejoin="round"/><path d="M8.200 1.800L23.800 2.400 19.600 22.100z" fill="#5b5b55" stroke="#2a2a28" stroke-width=".8" stroke-linejoin="round"/><path d="M14 12L23.800 2.400 19.600 22.100z" fill="#77776f"/><path d="M-.100 16.700L23.800 2.400" stroke="#e02630" stroke-width="1.200"/><circle cx="-.100" cy="16.700" r="1.500" fill="#e02630"/><circle cx="23.800" cy="2.400" r="1.500" fill="#e02630"/></svg><svg class="ic" style="left:1328px;top:58px" viewBox="0 0 24 24"><path d="M.900 10.300L4.300 1.700 22.400 .9 23.200 11.200C21 17 17 21 12.100 22.400 6 20 2 15 .900 10.300z" fill="#ebe9dc" stroke="#9a9a92" stroke-width=".9"/><path d="M6.500 2c-1 6 0 12 3 18M10 1.500c-1 6 0 13 2.500 20M13.500 1.300c-.5 7 0 13 1 19.500M17 1.200c0 6 0 12-.5 17M20 1.100c.5 5 .5 9-.5 13" fill="none" stroke="#8d8d84" stroke-width="1.300"/></svg><svg class="ic" style="left:1362px;top:58px" viewBox="0 0 24 24"><path d="M5.500 12C6 4 11 -.5 14.500 1.500c3 2 4.500 9 4.800 15" fill="none" stroke="#dc6a7a" stroke-width="1.200"/><path d="M.400 12L9 11.200 9.800 18.900 1.200 19.800z" fill="#1c8c2c" stroke="#0f6a1c" stroke-width=".6"/><ellipse cx="19" cy="19.400" rx="5" ry="3.900" fill="#e2e23c" stroke="#c8c820" stroke-width=".6"/></svg><svg class="ic" style="left:1396px;top:58px" viewBox="0 0 24 24"><path d="M.800 12.900L5.900 3.500 15.400 1.700 24 12 21.400 19.800 4.200 20.600z" fill="none" stroke="#4a8a5c" stroke-width="1.400" stroke-linejoin="round"/><path d="M5.900 3.500L10 9l5.400-7.300M10 9L4.200 20.600M10 9l11.400 10.800M.800 12.900L10 9l14 3M15.400 1.700l2 8.500" fill="none" stroke="#4a8a5c" stroke-width="1.100"/></svg><svg class="ic" style="left:1442px;top:58px" viewBox="0 0 24 24"><path d="M.300 8.500L9.400 .800 18.100 .300 23.800 5.100 23.400 13.800 12.800 23.400 .700 16.700z" fill="#f2b11e" stroke="#1a1a1a" stroke-width="1.200" stroke-linejoin="round"/><path d="M3.600 5.600L9.900 1.300H17.600L20 5.100 13.300 8 6.500 7.500z" fill="#e8c09e" stroke="#1a1a1a" stroke-width=".8" stroke-linejoin="round"/><path d="M.700 11.400L9.900 14.800V22L1.200 16.700z" fill="#8e7c5a" stroke="#1a1a1a" stroke-width=".8" stroke-linejoin="round"/><path d="M17.100 14.800L23.400 10.400 22.900 14.300 17.100 21z" fill="#6e5e3e" stroke="#1a1a1a" stroke-width=".8" stroke-linejoin="round"/><path d="M9.900 14.800V9.500L6.500 7.500M9.900 9.500H17.100V21M17.100 9.500L20 5.100M9.900 14.800H17.100M.300 8.500L3.600 5.600" fill="none" stroke="#1a1a1a" stroke-width=".8"/></svg><svg class="ic" style="left:1476px;top:58px" viewBox="0 0 24 24"><path d="M.300 8.500L9.400 .800 18.100 .300 23.800 5.100 23.400 13.800 12.800 23.400 .700 16.700z" fill="#bdd3f5" stroke="#1a1a1a" stroke-width="1.200" stroke-linejoin="round"/><path d="M3.600 5.600L9.900 1.300H17.600L20 5.100 13.300 8 6.500 7.500z" fill="#e8c09e" stroke="#1a1a1a" stroke-width=".8" stroke-linejoin="round"/><path d="M.700 11.400L9.900 14.800V22L1.200 16.700z" fill="#8e7c5a" stroke="#1a1a1a" stroke-width=".8" stroke-linejoin="round"/><path d="M17.100 14.800L23.400 10.400 22.900 14.300 17.100 21z" fill="#6e6a6e" stroke="#1a1a1a" stroke-width=".8" stroke-linejoin="round"/><path d="M9.900 14.800V9.500L6.500 7.500M9.900 9.500H17.100V21M17.100 9.500L20 5.100M9.900 14.800H17.100M.300 8.500L3.600 5.600" fill="none" stroke="#1a1a1a" stroke-width=".8"/></svg><svg class="ic" style="left:1510px;top:58px" viewBox="0 0 24 24"><path d="M.300 8.500L9.400 .800 18.100 .300 23.800 5.100 23.400 13.800 12.800 23.400 .700 16.700z" fill="#c4d9ab" stroke="#1a1a1a" stroke-width="1.200" stroke-linejoin="round"/><path d="M3.600 5.600L9.900 1.300H17.600L20 5.100 13.300 8 6.500 7.500z" fill="#e8c09e" stroke="#1a1a1a" stroke-width=".8" stroke-linejoin="round"/><path d="M.700 11.400L9.900 14.800V22L1.200 16.700z" fill="#8e7c5a" stroke="#1a1a1a" stroke-width=".8" stroke-linejoin="round"/><path d="M17.100 14.800L23.400 10.400 22.900 14.300 17.100 21z" fill="#6e6a4e" stroke="#1a1a1a" stroke-width=".8" stroke-linejoin="round"/><path d="M9.900 14.800V9.500L6.500 7.500M9.900 9.500H17.100V21M17.100 9.500L20 5.100M9.900 14.800H17.100M.300 8.500L3.600 5.600" fill="none" stroke="#1a1a1a" stroke-width=".8"/></svg><svg class="ic" style="left:1555px;top:58px" viewBox="0 0 24 24"><text x="2.500" y="17.500" font-family="Liberation Serif,serif" font-style="italic" font-weight="bold" font-size="18" fill="#2b2b9e" textLength="21" lengthAdjust="spacingAndGlyphs">F6</text><path d="M5 3.500C2.500 2 .800 3.500 1.500 5.500 2.300 7.500 5 7 5 5M6 16.500C3.500 19 .500 17 1.500 14.500M7 3.200C10 2 13.500 4 16 2" fill="none" stroke="#2b2b9e" stroke-width="1.300"/><path d="M1 19.800h23.500" stroke="#2eaa4c" stroke-width="2"/></svg><svg class="ic" style="left:10px;top:95px" viewBox="0 0 24 24"><rect x="1.600" y="1.200" width="21.500" height="4.600" rx="1.200" fill="#e01216"/><rect x="1.600" y="8.200" width="9.700" height="7.600" rx=".8" fill="#e01216"/><rect x="13.400" y="8.200" width="9.700" height="7.600" rx=".8" fill="#e01216"/><rect x="1.600" y="18.500" width="21.500" height="4.900" rx="1.200" fill="#e01216"/></svg><svg class="ic" style="left:56px;top:95px" viewBox="0 0 24 24"><path d="M.700 19.200L7.600 14.400 8.900 22.700z" fill="#9a9a9a"/><path d="M6.200 4.700L22.800 1.200 23.500 15.800 8.900 22.700z" fill="#fff" stroke="#111" stroke-width="1.100" stroke-linejoin="round"/><circle cx="16.600" cy="4" r="2.100" fill="#8a1a20"/><circle cx="8.900" cy="22.700" r="1.900" fill="#111"/><circle cx="19.300" cy="18.500" r="1.600" fill="#111"/><path d="M22.300 5.500l1.800 4h-3.600z" fill="#111"/></svg><svg class="ic" style="left:90px;top:95px" viewBox="0 0 24 24"><path d="M-.100 19.200L4.700 11.600 13.400 7.500 23.100 8.900" fill="none" stroke="#111" stroke-width="1.100"/><circle cx="-0.1" cy="19.2" r="2.500" fill="#c8161e" stroke="#5a0a0e" stroke-width=".7"/><circle cx="4.7" cy="11.6" r="2.500" fill="#c8161e" stroke="#5a0a0e" stroke-width=".7"/><circle cx="13.4" cy="7.5" r="2.500" fill="#c8161e" stroke="#5a0a0e" stroke-width=".7"/><circle cx="23.1" cy="8.9" r="2.500" fill="#c8161e" stroke="#5a0a0e" stroke-width=".7"/></svg><svg class="ic" style="left:124px;top:95px" viewBox="0 0 24 24"><path d="M1.900 13L6 6.100 13 4.700 15 10.200 8.800 17.200z" fill="#fff" stroke="#111" stroke-width="1" stroke-linejoin="round"/><path d="M6 6.100L8.800 17.200 13 4.700M1.900 13l6.900 4.200" fill="none" stroke="#3a6a8a" stroke-width=".7"/><path d="M1.900 13l-1.500.5 2 2z" fill="#111"/><path d="M8.800 17.200L17.100 10.900 24 15.800 17.100 22z" fill="#f04c1e" stroke="#b8300c" stroke-width=".6"/><path d="M17.100 10.900V22M8.800 17.200L24 15.800" stroke="#ffb090" stroke-width=".6"/></svg><svg class="ic" style="left:158px;top:95px" viewBox="0 0 24 24"><path d="M1.100 22L24 7.500" stroke="#111" stroke-width="1.500"/><path d="M1.100 3.300L12.200 15.100" stroke="#e02a3a" stroke-width="1.500"/><rect x="11" y="9.500" width="3.200" height="3.200" fill="#fff" stroke="#111" stroke-width=".8" transform="rotate(-30 12.600 11.100)"/><circle cx="12.900" cy="15.500" r="2.200" fill="#c8161e" stroke="#5a0a0e" stroke-width=".6"/></svg><svg class="ic" style="left:192px;top:95px" viewBox="0 0 24 24"><path d="M1.700 19.900L8.700 17.900 11.400 22.700z" fill="#8a8a8a"/><path d="M1.700 8.900L17 1.200 23.900 7.500" fill="none" stroke="#111" stroke-width="1.200" stroke-dasharray="2.200 1.600"/><path d="M1.700 8.900L6 16" fill="none" stroke="#111" stroke-width="1.200" stroke-dasharray="2.200 1.600"/><path d="M8 11.600L12.100 6.800 19.800 7.500 22.500 15.800 18.400 22 10.800 20.600z" fill="#fff" stroke="#111" stroke-width="1.300" stroke-linejoin="round"/></svg><svg class="ic" style="left:226px;top:95px" viewBox="0 0 24 24"><path d="M.800 9.400L13.600 4.800 23.500 12.400 23.500 17.700 16.700 22.200 10.600 18.400 5.300 20.700 .800 16.900z" fill="#fff" stroke="#111" stroke-width="1.100" stroke-linejoin="round"/><path d="M.800 9.400L5.300 13.500 10.600 11.500 16.700 16.500 23.500 12.400M5.300 13.500v7.200M10.600 11.500v6.900M16.700 16.500v5.700M.800 3.300V17" fill="none" stroke="#111" stroke-width="1"/><path d="M13.600 2.500v2.300" stroke="#111" stroke-width="1"/></svg><svg class="ic" style="left:260px;top:95px" viewBox="0 0 24 24"><path d="M.300 8L8 9.500 5 11.500z" fill="#8a8a8a"/><path d="M4.600 2.600C14 1 24 5 24.200 13.100 24 18 22 21 19.700 22.200L15.100 20.700C17 18 17 15 15.900 13.100 14 9 9 8 5.300 7.100z" fill="#efe3ef" stroke="#4a3a4a" stroke-width="1" stroke-linejoin="round"/><path d="M5 4.500C13 3.500 21 7 21.500 13.500 21.500 17 20 20 18 21.500M5.200 5.800C11 5.500 18 8 18.800 13.300 19 16.500 18 19.500 16.500 21" fill="none" stroke="#9a6a9a" stroke-width=".8"/><ellipse cx="5" cy="4.800" rx="1.300" ry="2.400" fill="#fff" stroke="#4a3a4a" stroke-width=".8"/></svg><svg class="ic" style="left:294px;top:95px" viewBox="0 0 24 24"><path d="M0 13.100L4.500 4.100 12.100 3.300 23.400 14.600 12.900 22.200 .800 17.700z" fill="#fff" stroke="#111" stroke-width="1.100" stroke-linejoin="round"/><path d="M0 13.100L8 11.500 23.400 14.600M8 11.500L12.900 22.200M8 11.500L7.500 9" fill="none" stroke="#111" stroke-width=".9"/><path d="M.800 8L4.500 4.100 12.100 3.300 14.400 7.100 7.600 9.400zM4.500 4.100L7.600 9.400M12.100 3.300L7.600 9.400" fill="#fbeaea" stroke="#e0202a" stroke-width="1"/></svg><svg class="ic" style="left:328px;top:95px" viewBox="0 0 24 24"><path d="M.700 7.100L8.300 5.600 6.800 19.200 1.500 16.100z" fill="#8a8a8a" stroke="#333" stroke-width=".6"/><circle cx="15.100" cy="13.400" r="8.300" fill="#fff" stroke="#111" stroke-width="1.300"/><path d="M8 5C8 1.500 12 .8 15 .8s6.500 1.200 6 4.500c-2.500 2-10 2.500-13-.3z" fill="#c9c9e2" stroke="#111" stroke-width="1"/><path d="M9.500 5.500C9 12 6 14 3.500 17.500" fill="none" stroke="#111" stroke-width="1.100"/><path d="M12.800 7v15.200" stroke="#e0202a" stroke-width="1.400"/><path d="M12.800 12l4.500 9-4.500 1.200zM12.800 13l-4.500 5.500 4.500 2z" fill="#9a9a9a" stroke="#333" stroke-width=".5"/></svg><svg class="ic" style="left:362px;top:95px" viewBox="0 0 24 24"><path d="M.700 20.700L4 17.500 8.300 21.400z" fill="#9a9a9a"/><path d="M.700 7.100L6.800 1.800 18.100 7.100 20.400 13.900 8.300 21.400 .700 20.700z" fill="#fff" stroke="#111" stroke-width="1.100" stroke-linejoin="round"/><path d="M.700 7.100L12.800 10.900 18.100 7.100M12.800 10.900L8.300 21.400M12.800 10.900L20.400 13.900" fill="none" stroke="#111" stroke-width=".9"/><path d="M9 9.700l3.800 1.200 3-2.200M12.800 10.900l-1.300 3.200" stroke="#e0202a" stroke-width="1.100" fill="none"/><circle cx="12.800" cy="10.900" r="1.900" fill="#b8161e"/><path d="M19.500 10.500L24 14 19.500 16.500z" fill="#111"/></svg><svg class="ic" style="left:396px;top:95px" viewBox="0 0 24 24"><path d="M3 24.500V10.100" stroke="#111" stroke-width="2.200"/><path d="M12.800 4.100H23.400" stroke="#111" stroke-width="2.200"/><path d="M3 11C3 6.500 7 4.100 13 4.100" fill="none" stroke="#e0202a" stroke-width="1.500"/><path d="M3 10V3.500h9" fill="none" stroke="#e0202a" stroke-width=".6" stroke-dasharray="1 1"/></svg><svg class="ic" style="left:430px;top:95px" viewBox="0 0 24 24"><path d="M2.200 24.500V11" stroke="#111" stroke-width="2.200"/><path d="M2.200 11V2.100" stroke="#111" stroke-width="1.400" stroke-dasharray="2 1.500"/><path d="M12 2.100H23.400" stroke="#111" stroke-width="2"/><path d="M2.200 2.100H12" stroke="#111" stroke-width="1.200" stroke-dasharray="2 1.500"/><path d="M2.200 11.600L12 2.600" stroke="#e0202a" stroke-width="1.600"/></svg><svg class="ic" style="left:464px;top:95px" viewBox="0 0 24 24"><path d="M4.800 17.400L23.700 2.600M4.800 17.400H23.700" stroke="#111" stroke-width="1.800" fill="none"/><path d="M.300 20.700L14.700 10.100" stroke="#e0202a" stroke-width="1.500"/><circle cx="5.300" cy="17.400" r="2.100" fill="#7a1218"/></svg><svg class="ic" style="left:498px;top:95px" viewBox="0 0 24 24"><path d="M3.300 8.600L13.100 1.300 23.700 2.300V22.200L9.400 16.100z" fill="#fff"/><path d="M3.300 8.600L13.100 1.300 23.700 2.300" fill="none" stroke="#111" stroke-width="1.300"/><path d="M.600 9.500L8.800 18.300 23.700 24" fill="none" stroke="#e0202a" stroke-width="1.800"/><path d="M1.800 7.800L9.800 15.800 23.700 21.500" fill="none" stroke="#222" stroke-width="2"/></svg><svg class="ic" style="left:532px;top:95px" viewBox="0 0 24 24"><path d="M0 14l4.100-2v11.500L0 21z" fill="#9a9a9a"/><path d="M4.100 7.100L14.600 1.800 23.700 2.600V23.700H4.100z" fill="#fff"/><path d="M4.100 23.700V7.100L14.600 1.800 23.700 2.600M4.100 7.100L13 8.600 23.700 6M13 8.600V23.700M8.500 8v15.700M18.500 7.500l1 16.200M22.500 12v11.700M4.100 23.700h10" fill="none" stroke="#111" stroke-width="1.600"/><path d="M3 17.700H24M14 9l4 12 4-9" fill="none" stroke="#e0202a" stroke-width="1.200"/></svg><svg class="ic" style="left:566px;top:95px" viewBox="0 0 24 24"><path d="M1.800 14.600L7.800 22.900 23.700 19.200 14 15z" fill="#fff" stroke="#111" stroke-width="1" stroke-linejoin="round"/><path d="M6.300 1.800C14 5 20 11 23.700 19.200 17 19.500 11 19 7 16.500 4.500 15.500 2.500 15 1.800 14.600z" fill="#dfe2f4" stroke="#e0202a" stroke-width="1.100" stroke-linejoin="round"/><path d="M6.300 1.800L1.800 14.600" stroke="#e0202a" stroke-width="1.100"/><path d="M7 12c4 1 8 3 10 6.500" fill="none" stroke="#3a5ac8" stroke-width="1"/><path d="M6.300 1.800C9 8 11 14 12 19" fill="none" stroke="#e890a0" stroke-width=".7"/></svg><svg class="ic" style="left:600px;top:95px" viewBox="0 0 24 24"><path d="M0 20l3.300-2v5z" fill="#777"/><path d="M3.3 9.6V21.5a2.65 1.300 0 005.3 0V9.6" fill="#fff" stroke="#111" stroke-width="1.1"/><ellipse cx="5.949999999999999" cy="9.6" rx="2.65" ry="1.300" fill="#fff" stroke="#111" stroke-width="1.1"/><path d="M11.6 5.8V18a2.65 1.300 0 005.3 0V5.8" fill="#fff" stroke="#111" stroke-width="1.1"/><ellipse cx="14.25" cy="5.8" rx="2.65" ry="1.300" fill="#fff" stroke="#111" stroke-width="1.1"/><path d="M23.700 1.800h-2.500c-1 0-1.300.5-1.300 1.500v10.500c0 1.500.5 2.300 1.800 2.300h1.500" fill="#fff" stroke="#111" stroke-width="1.200"/></svg><svg class="ic" style="left:634px;top:95px" viewBox="0 0 24 24"><path d="M8.5 2.8V12a1.7 1.300 0 003.4 0V2.8" fill="#fff" stroke="#111" stroke-width="0.9"/><ellipse cx="10.2" cy="2.8" rx="1.7" ry="1.300" fill="#fff" stroke="#111" stroke-width="0.9"/><path d="M13.5 3.8V13a1.7 1.300 0 003.4 0V3.8" fill="#fff" stroke="#111" stroke-width="0.9"/><ellipse cx="15.2" cy="3.8" rx="1.7" ry="1.300" fill="#fff" stroke="#111" stroke-width="0.9"/><path d="M18 5.5V15a1.7 1.300 0 003.4 0V5.5" fill="#fff" stroke="#111" stroke-width="0.9"/><ellipse cx="19.7" cy="5.5" rx="1.7" ry="1.300" fill="#fff" stroke="#111" stroke-width="0.9"/><path d="M4 5V15a1.7 1.300 0 003.4 0V5" fill="#fff" stroke="#111" stroke-width="0.9"/><ellipse cx="5.7" cy="5" rx="1.7" ry="1.300" fill="#fff" stroke="#111" stroke-width="0.9"/><path d="M9 6.5V18a1.7 1.300 0 003.4 0V6.5" fill="#fff" stroke="#111" stroke-width="0.9"/><ellipse cx="10.7" cy="6.5" rx="1.7" ry="1.300" fill="#fff" stroke="#111" stroke-width="0.9"/><path d="M14 8V20a1.7 1.300 0 003.4 0V8" fill="#fff" stroke="#111" stroke-width="0.9"/><ellipse cx="15.7" cy="8" rx="1.7" ry="1.300" fill="#fff" stroke="#111" stroke-width="0.9"/><path d="M19 9V19a1.7 1.300 0 003.4 0V9" fill="#fff" stroke="#111" stroke-width="0.9"/><ellipse cx="20.7" cy="9" rx="1.7" ry="1.300" fill="#fff" stroke="#111" stroke-width="0.9"/><path d="M1 8V17.5a1.7 1.300 0 003.4 0V8" fill="#fff" stroke="#111" stroke-width="0.9"/><ellipse cx="2.7" cy="8" rx="1.7" ry="1.300" fill="#fff" stroke="#111" stroke-width="0.9"/><path d="M5.5 10V21a1.7 1.300 0 003.4 0V10" fill="#fff" stroke="#111" stroke-width="0.9"/><ellipse cx="7.2" cy="10" rx="1.7" ry="1.300" fill="#fff" stroke="#111" stroke-width="0.9"/><path d="M10.5 12V23a1.7 1.300 0 003.4 0V12" fill="#fff" stroke="#111" stroke-width="0.9"/><ellipse cx="12.2" cy="12" rx="1.7" ry="1.300" fill="#fff" stroke="#111" stroke-width="0.9"/></svg><svg class="ic" style="left:668px;top:95px" viewBox="0 0 24 24"><path d="M3 7V16a1.4 1.300 0 002.8 0V7" fill="#fff" stroke="#111" stroke-width="0.9"/><ellipse cx="4.4" cy="7" rx="1.4" ry="1.300" fill="#fff" stroke="#111" stroke-width="0.9"/><path d="M6 4.5V14.5a1.4 1.300 0 002.8 0V4.5" fill="#fff" stroke="#111" stroke-width="0.9"/><ellipse cx="7.4" cy="4.5" rx="1.4" ry="1.300" fill="#fff" stroke="#111" stroke-width="0.9"/><path d="M9.5 3.2V14a1.4 1.300 0 002.8 0V3.2" fill="#fff" stroke="#111" stroke-width="0.9"/><ellipse cx="10.9" cy="3.2" rx="1.4" ry="1.300" fill="#fff" stroke="#111" stroke-width="0.9"/><path d="M13 2.8V14a1.4 1.300 0 002.8 0V2.8" fill="#fff" stroke="#111" stroke-width="0.9"/><ellipse cx="14.4" cy="2.8" rx="1.4" ry="1.300" fill="#fff" stroke="#111" stroke-width="0.9"/><path d="M16.5 3.2V14.5a1.4 1.300 0 002.8 0V3.2" fill="#fff" stroke="#111" stroke-width="0.9"/><ellipse cx="17.9" cy="3.2" rx="1.4" ry="1.300" fill="#fff" stroke="#111" stroke-width="0.9"/><path d="M19.5 4.5V15.5a1.4 1.300 0 002.8 0V4.5" fill="#fff" stroke="#111" stroke-width="0.9"/><ellipse cx="20.9" cy="4.5" rx="1.4" ry="1.300" fill="#fff" stroke="#111" stroke-width="0.9"/><path d="M21.6 7V17a1.4 1.300 0 002.8 0V7" fill="#fff" stroke="#111" stroke-width="0.9"/><ellipse cx="23.0" cy="7" rx="1.4" ry="1.300" fill="#fff" stroke="#111" stroke-width="0.9"/><ellipse cx="13.800" cy="19.200" rx="9.300" ry="4.300" fill="#fff" stroke="#111" stroke-width="1.200"/><path d="M1 12h2.500M1 14.500h2.500M1 17h2.500" stroke="#555" stroke-width="1"/></svg><svg class="ic" style="left:702px;top:95px" viewBox="0 0 24 24"><path d="M1.100 14.600L7.900 10.100V23.700z" fill="#8f8f8f"/><path d="M7.900 10.100L14.700 6.300 16.900 7.800 23.700 2.600V14.600L16.900 18.400 14.700 17.700 7.900 23.700z" fill="#fff" stroke="#111" stroke-width="1.500" stroke-linejoin="round"/><path d="M14.700 6.300V17.700M16.900 7.800V18.400" stroke="#777" stroke-width=".8"/></svg><svg class="ic" style="left:736px;top:95px" viewBox="0 0 24 24"><path d="M.300 13.100L14.600 6.300V19.200L7.800 17.700z" fill="#8f8f8f"/><path d="M14.600 6.300L23.700 1.800V16.100L14.600 22.900z" fill="#fff" stroke="#111" stroke-width="1.300" stroke-linejoin="round"/><path d="M14.600 6.300V22.900" stroke="#111" stroke-width="2.400"/><path d="M17.700 10.600l1.700-.8v5l-1.700 1z" fill="#333"/></svg><svg class="ic" style="left:770px;top:95px" viewBox="0 0 24 24"><path d="M-.100 1.300H7.400V18.400L-.100 13z" fill="#8c8c8c"/><path d="M7.900 1.7999999999999998L17 0.7999999999999998L23.400 2.2L23.400 3.4L17 4.0L7.900 3.4z" fill="#b9b9b9" stroke="#111" stroke-width=".6"/><path d="M7.900 3.4C7 4.4 7 6 7.900 7L17 8.2L23.400 6.2V3.4L17 4.2z" fill="#fff" stroke="#111" stroke-width="1.200" stroke-linejoin="round"/><path d="M7.900 7.0L17 6.0L23.400 7.3999999999999995L23.400 8.6L17 9.2L7.900 8.6z" fill="#c9c9c9" stroke="#111" stroke-width=".6"/><path d="M7.900 8.6C7 9.6 7 12 7.900 13L17 14.2L23.400 12.2V8.6L17 9.4z" fill="#fff" stroke="#111" stroke-width="1.200" stroke-linejoin="round"/><path d="M7.900 13.0L17 12.0L23.400 13.4L23.400 14.6L17 15.2L7.900 14.6z" fill="#d4d4d4" stroke="#111" stroke-width=".6"/><path d="M7.900 14.6C7 15.6 7 20.8 7.900 21.8L17 23.0L23.400 21.0V14.6L17 15.4z" fill="#fff" stroke="#111" stroke-width="1.200" stroke-linejoin="round"/></svg><svg class="ic" style="left:804px;top:95px" viewBox="0 0 24 24"><path d="M15.600 18.400L24 14.700V18.900L10.300 22.100z" fill="#8c8c8c"/><path d="M.700 21.600L21.500 1.800H24V4.500L7.100 23.200z" fill="#dadada" stroke="#7c7c7c" stroke-width=".9" stroke-linejoin="round"/><path d="M3.5 18.7l5.200 1.300M5.6 16.7l5.200 1.300M7.6 14.8l5.200 1.300M9.7 12.8l5.200 1.300M11.8 10.9l5.200 1.300M13.8 9.0l5.200 1.300M15.8 7.0l5.200 1.300M17.9 5.1l5.200 1.300M19.9 3.1l5.200 1.300" stroke="#9a9a9a" stroke-width=".9"/></svg><svg class="ic" style="left:838px;top:95px" viewBox="0 0 24 24"><path d="M.400 5.300H5.200V7.700H8.900V10.400H11.600L23.900 10.900" fill="none" stroke="#111" stroke-width="1.400"/><path d="M.400 8.800L11.600 14.100" stroke="#111" stroke-width="1.200"/><path d="M10.500 13.800H15.300" stroke="#111" stroke-width="1.900"/><path d="M.400 24.300L23.900 13V11.500" fill="none" stroke="#111" stroke-width="1.300"/><path d="M.400 20H4.600V17.300H8.400V15.200L11.600 14.700" fill="none" stroke="#111" stroke-width="1.300"/><path d="M.600 19.300h2.500" stroke="#8a8a8a" stroke-width="1.300"/></svg><svg class="ic" style="left:872px;top:95px" viewBox="0 0 24 24"><path d="M.100 7.300H4.300V9.700H8.100V12.400H11.300V13.300H24.100M.100 24.500H4.300V21.800H8.600V19.100H12.900V16.400H19.300" fill="none" stroke="#9c9c9c" stroke-width="1.500"/><path d="M.100 5.300H4.300V7.700H8.100V10.400H11.300V11.400H24.100" fill="none" stroke="#111" stroke-width="1.300"/><path d="M.100 22.700H4.300V20H8.600V17.300H12.900V14.700H19.300" fill="none" stroke="#111" stroke-width="1.300"/><path d="M11.300 13.800H16.600" stroke="#111" stroke-width="1.900"/></svg><svg class="ic" style="left:906px;top:95px" viewBox="0 0 24 24"><path d="M.300 2.300L16.300 10.900M.300 7.700L8.900 13M.300 24.300L16.300 14.700M.300 18.400L8.900 13.600" fill="none" stroke="#111" stroke-width="1.200"/><path d="M1 4.200l4.300.8M5.500 6.800l4.200.8" stroke="#111" stroke-width="1.900"/><path d="M11 10.900H23.800" stroke="#111" stroke-width="2"/><path d="M17.400 16.300H23.800M18.500 10.900V16.300" stroke="#111" stroke-width="1.400"/></svg><svg class="ic" style="left:940px;top:95px" viewBox="0 0 24 24"><path d="M1.100 1.800L14.700 1 19.900 8.600V20H23.500V23.700H1.100z" fill="#9c9c9c"/><path d="M10 12L1.500 8M10 12L3 4M10 12L8 2M10 12L13 3M10 12l7-5M10 12l9 1M10 12l8 6M10 12l3 9M10 12l-4 10" stroke="#f4f4f4" stroke-width="1.300"/><circle cx="10" cy="12" r="2" fill="#666"/><path d="M1.100 12.500h7M1.100 17c3-2 6-2 9 0" stroke="#d8d8d8" stroke-width="1" fill="none"/></svg><svg class="ic" style="left:974px;top:95px" viewBox="0 0 24 24"><path d="M1 17.700C6 17 8 13 11 9S17 2.500 23.700 1.800V14C19 15 17 18 14.500 21S9 23.700 1 23.700z" fill="#8a8a8a"/><path d="M1 19.500C6 19 9 15 12 11s6-6 11.700-6.500M1 22C7 21.500 10 17 13 13.500s6-5.500 10.700-6" fill="none" stroke="#3a3a3a" stroke-width="1.300"/><path d="M13.500 6.500l5 3M16.500 4.500l4.500 2.500M19.500 3l3.500 2" stroke="#e8e8e8" stroke-width="1.300"/><path d="M1 23.700h3" stroke="#fff" stroke-width="1.200"/></svg><svg class="ic" style="left:1008px;top:95px" viewBox="0 0 24 24"><path d="M2.500 19.200L14.600 16.100 20.700 19.200 6.300 22.900z" fill="#c4c4c4" stroke="#8a8a8a" stroke-width="1" stroke-linejoin="round"/><path d="M7.800 6.300L20.700 1.800V13.900L7.800 19.200z" fill="#f6f6f6" stroke="#8a8a8a" stroke-width="2.600" stroke-linejoin="round"/></svg><svg class="ic" style="left:1042px;top:95px" viewBox="0 0 24 24"><path d="M3 19l5.600-2 0 6.700z" fill="#c4c4c4" stroke="#8a8a8a" stroke-width=".8"/><path d="M8.600 23.700V5.600L19.900 1.800V19.200" fill="none" stroke="#8a8a8a" stroke-width="2.800" stroke-linejoin="round"/><path d="M8.600 23.700V5.600L19.900 1.800V19.200" fill="none" stroke="#c8c8c8" stroke-width=".9" stroke-linejoin="round"/></svg><svg class="ic" style="left:1076px;top:95px" viewBox="0 0 24 24"><path d="M3.7 1H24V16L5.500 24.300 .600 14.600V10.200L3.700 9.300z" fill="#9c9c9c" stroke="#4a4a4a" stroke-width=".8" stroke-linejoin="round"/><path d="M7.500 2.500H22.800V15.300L7.500 21.800z" fill="#ededed"/><path d="M9.300 2V21.500M13.800 2V19.800M18 2V18M21.600 2V16.300" stroke="#111" stroke-width="2.500"/><path d="M7.500 8.500L22.800 7.300M7.500 15L22.800 11.800" stroke="#111" stroke-width="1.700"/><path d="M.600 12.400h3" stroke="#e0e0e0" stroke-width="1.500"/></svg><svg class="ic" style="left:1110px;top:95px" viewBox="0 0 24 24"><defs><clipPath id="c32"><rect x=".100" y="1" width="23.800" height="23.700"/></clipPath></defs><g clip-path="url(#c32)"><rect x="0" y="0" width="25" height="26" fill="#111"/><path d="M-20.0 25L1.0 0M-16.7 25L4.3 0M-13.4 25L7.6 0M-10.1 25L10.9 0M-6.8 25L14.2 0M-3.5 25L17.5 0M-0.2 25L20.8 0M3.1 25L24.1 0M6.4 25L27.4 0M9.7 25L30.7 0M13.0 25L34.0 0M16.3 25L37.3 0M19.6 25L40.6 0M22.9 25L43.9 0" stroke="#fafafa" stroke-width="1.500"/><path d="M-1 -2.500L25 9.500M-1 5.800L25 17.800M-1 14.100L25 26.100M-1 22.400L25 34.400" stroke="#111" stroke-width="3"/></g></svg><svg class="ic" style="left:1144px;top:95px" viewBox="0 0 24 24"><defs><clipPath id="c33"><rect x="0" y="1" width="23.800" height="23.700"/></clipPath></defs><g clip-path="url(#c33)"><rect x="0" y="1" width="23.800" height="23.700" fill="#8e8e8e"/><path d="M7.500 1H24V4L13.700 8z" fill="#6a6a6a"/><path d="M7.5 3.9000000000000004L13.7 9.4L23.8 4.4V7.5L13.7 12.6L7.2 6.5z" fill="#4c4c4c"/><path d="M7.5 2.7L13.7 8L23.8 3.2V5.9L13.7 10.9L7.3 5.1z" fill="#fbfbfb"/><path d="M6.6 9.7L12.8 14.3L23.8 9.2V12.3L12.8 17.5L6.3 12.3z" fill="#4c4c4c"/><path d="M6.6 8.5L12.8 12.9L23.8 8V10.7L12.8 15.8L6.3999999999999995 10.9z" fill="#fbfbfb"/><path d="M6.2 14.899999999999999L11.9 19.099999999999998L23.8 14.1V17.2L11.9 22.299999999999997L5.9 17.5z" fill="#4c4c4c"/><path d="M6.2 13.7L11.9 17.7L23.8 12.9V15.600000000000001L11.9 20.599999999999998L6.0 16.099999999999998z" fill="#fbfbfb"/><path d="M5.7 20.2L11 23.9L23.8 18.9V22.0L11 27.1L5.4 22.8z" fill="#4c4c4c"/><path d="M5.7 19L11 22.5L23.8 17.7V20.4L11 25.4L5.5 21.4z" fill="#fbfbfb"/></g></svg><svg class="ic" style="left:1178px;top:95px" viewBox="0 0 24 24"><path d="M.400 21.200L24.200 16V18.100L.400 24.300z" fill="#8a8a8a"/><defs><linearGradient id="g34" x1="0" x2="1"><stop offset="0" stop-color="#fff"/><stop offset=".75" stop-color="#fff"/><stop offset="1" stop-color="#c4c4c4"/></linearGradient></defs><path d="M.400 1H10.500V21.700L.400 20.800z" fill="url(#g34)"/><path d="M11.800 1H16.200V19.500L11.800 20.700z" fill="url(#g34)"/><path d="M17.100 1H21.500V16.800L17.100 18.500z" fill="url(#g34)"/><path d="M.400 1V20.800M10.500 1V21.700M16.200 1V19.500M21.500 1V16.800" stroke="#111" stroke-width="1.100"/></svg><svg class="ic" style="left:1212px;top:95px" viewBox="0 0 24 24"><defs><linearGradient id="gG" x1="0" y1="0" x2="1" y2="1"><stop offset="0" stop-color="#efefef"/><stop offset="1" stop-color="#4a4a4a"/></linearGradient><linearGradient id="gH" x1="1" y1="0" x2="0" y2="1"><stop offset="0" stop-color="#e4e4e4"/><stop offset="1" stop-color="#5a5a5a"/></linearGradient></defs><path d="M0 11.800L11.500 1.400H24.100V24.900H9.300z" fill="#121212"/><path d="M3.500 11.800L9.500 7V16.800z" fill="url(#gG)"/><path d="M2 11.800L10.600 4.800" stroke="#dcdcdc" stroke-width=".7"/><path d="M14.500 4C17.500 3.500 20.500 4.500 22.300 7L22 9C20 7 17 6.500 14.600 7.500z" fill="url(#gH)"/><path d="M14.800 11.200C17.500 10.500 20 11.300 22 13L21.500 15C19.500 13.500 17 13.200 14.600 14z" fill="url(#gG)"/><path d="M13.800 17.200L19 16.500 20.300 19 15.500 20.200z" fill="url(#gH)"/><path d="M12.500 22L14.500 23 21.500 22.300 22.300 24.300H13.500z" fill="url(#gG)"/><path d="M12.300 3C16 2 21 3 23.500 6M12.800 10C16 8.800 20.500 9.500 23.500 12M11.500 16L20 14.800" stroke="#e8e8e8" stroke-width=".7" fill="none"/></svg><svg class="ic" style="left:1246px;top:95px" viewBox="0 0 24 24"><defs><linearGradient id="gG2" x1="0" y1="0" x2="1" y2="1"><stop offset="0" stop-color="#efefef"/><stop offset="1" stop-color="#4a4a4a"/></linearGradient><linearGradient id="gH2" x1="1" y1="0" x2="0" y2="1"><stop offset="0" stop-color="#e4e4e4"/><stop offset="1" stop-color="#5a5a5a"/></linearGradient></defs><path d="M0 11.800L11.500 1.400H24.100V24.900H9.300z" fill="#121212"/><path d="M3.500 11.800L9.500 7V16.800z" fill="url(#gG2)"/><path d="M2 11.800L10.600 4.800" stroke="#dcdcdc" stroke-width=".7"/><path d="M14.500 4C17.500 3.500 20.500 4.500 22.300 7L22 9C20 7 17 6.500 14.600 7.500z" fill="url(#gH2)"/><path d="M14.800 11.200C17.500 10.500 20 11.300 22 13L21.500 15C19.500 13.500 17 13.200 14.600 14z" fill="url(#gG2)"/><path d="M13.800 17.200L19 16.500 20.300 19 15.500 20.200z" fill="url(#gH2)"/><path d="M12.500 22L14.500 23 21.500 22.300 22.300 24.300H13.500z" fill="url(#gG2)"/><path d="M12.300 3C16 2 21 3 23.500 6M12.800 10C16 8.800 20.500 9.500 23.500 12M11.500 16L20 14.800" stroke="#e8e8e8" stroke-width=".7" fill="none"/><path d="M1.500 13.500L10 25M5 17.500l7-3.500M.300 15.500L6.500 24.900" stroke="#fbfbfb" stroke-width="2.200"/><path d="M10.800 3.500L12.500 24.500" stroke="#fbfbfb" stroke-width="1.800"/></svg><svg class="ic" style="left:1280px;top:95px" viewBox="0 0 24 24"><defs><clipPath id="c37"><rect x="0" y="1.400" width="24" height="23.500"/></clipPath></defs><g clip-path="url(#c37)"><path d="M3.8 12.3L43.8 -12.5" stroke="#565656" stroke-width="5" stroke-linecap="round"/><path d="M3.8 12.3L43.8 -12.5" stroke="#8c8c8c" stroke-width="3.600" stroke-linecap="round"/><path d="M3.2 11.3L43.2 -13.5" stroke="#b9b9b9" stroke-width="1" stroke-linecap="round"/><path d="M9.8 15.1L49.8 -9.7" stroke="#565656" stroke-width="5" stroke-linecap="round"/><path d="M9.8 15.1L49.8 -9.7" stroke="#8c8c8c" stroke-width="3.600" stroke-linecap="round"/><path d="M9.2 14.1L49.2 -10.7" stroke="#b9b9b9" stroke-width="1" stroke-linecap="round"/><path d="M15.8 17.3L55.8 -7.5" stroke="#565656" stroke-width="5" stroke-linecap="round"/><path d="M15.8 17.3L55.8 -7.5" stroke="#8c8c8c" stroke-width="3.600" stroke-linecap="round"/><path d="M15.2 16.3L55.2 -8.5" stroke="#b9b9b9" stroke-width="1" stroke-linecap="round"/><path d="M21.3 19.4L61.3 -5.4" stroke="#565656" stroke-width="5" stroke-linecap="round"/><path d="M21.3 19.4L61.3 -5.4" stroke="#8c8c8c" stroke-width="3.600" stroke-linecap="round"/><path d="M20.7 18.4L60.7 -6.4" stroke="#b9b9b9" stroke-width="1" stroke-linecap="round"/><path d="M25.7 21.1L65.7 -3.7" stroke="#565656" stroke-width="5" stroke-linecap="round"/><path d="M25.7 21.1L65.7 -3.7" stroke="#8c8c8c" stroke-width="3.600" stroke-linecap="round"/><path d="M25.1 20.1L65.1 -4.7" stroke="#b9b9b9" stroke-width="1" stroke-linecap="round"/></g></svg><svg class="ic" style="left:1314px;top:95px" viewBox="0 0 24 24"><defs><clipPath id="c38"><rect x=".400" y="1.400" width="23.500" height="22.500"/></clipPath></defs><g clip-path="url(#c38)"><path d="M.400 5C4 4.300 7.500 3 11 1M.400 9.500C5 8.500 9 6.500 12.500 4M.400 14.500C5 12.500 8.500 10 11.500 7.500M1.500 20C4.500 16.500 7.500 13 10.500 10.500" stroke="#111" stroke-width="1.700" fill="none"/><path d="M12.600 3.500L8.300 23.500M18.100 1.500L15.800 21.300M23 1L23.300 20.200" stroke="#111" stroke-width="3"/><path d="M12.900 5L9.200 22M18.300 3.500L16.300 20M23.100 3V19" stroke="#b4b4b4" stroke-width="1"/><path d="M4 24l3.500-8" stroke="#111" stroke-width="1.500"/></g></svg><svg class="ic" style="left:1348px;top:95px" viewBox="0 0 24 24"><defs><linearGradient id="g39" x1="0" y1="0" x2="1" y2="0"><stop offset="0" stop-color="#fafafa"/><stop offset="1" stop-color="#8e8e8e"/></linearGradient></defs><path d="M.400 14L11.300 2.500 23.900 12.900 11.300 23.800z" fill="#fdfdfd" stroke="#333" stroke-width="1.300" stroke-linejoin="round"/><path d="M11.300 2.500L23.900 12.900 17 13.500 11.300 8z" fill="#c8c8c8"/><path d="M11.300 7.500L17.500 13.500H14.500V20L11.300 23 8.500 20.500V14.500L5 15.500 3.500 14z" fill="url(#g39)" stroke="#555" stroke-width=".9" stroke-linejoin="round"/><path d="M11.300 7.500V23" stroke="#6a6a6a" stroke-width=".9"/></svg><svg class="ic" style="left:1394px;top:95px" viewBox="0 0 24 24"><circle cx="9" cy="6.800" r="4.200" fill="#1c1c1c"/><circle cx="16.900" cy="7.500" r="4.700" fill="#1c1c1c"/><circle cx="9" cy="6.800" r="1.500" fill="#d9d9d9"/><circle cx="16.900" cy="7.500" r="1.800" fill="#d9d9d9"/><rect x="6.500" y="11.500" width="13" height="9.500" rx="1" fill="#1c1c1c"/><path d="M17 15l4.500-1.500c1.500 0 2 2 2 4s-.5 4.500-2 4.500L17 20.500z" fill="#1c1c1c"/><ellipse cx="21.500" cy="18" rx="1.500" ry="3.200" fill="#d9d9d9"/><rect x="9" y="13.500" width="4" height="3" fill="#d9d9d9"/><circle cx="4.400" cy="19.700" r="3.300" fill="#fff" stroke="#111" stroke-width="1"/><path d="M4.400 17.500v4.400M2.200 19.700h4.400" stroke="#111" stroke-width="1.200"/></svg><svg class="ic" style="left:1428px;top:95px" viewBox="0 0 24 24"><circle cx="11.200" cy="12.800" r="9.800" fill="#c6c6c6" stroke="#adadad" stroke-width=".8"/><path d="M3.500 11c4-4 11-4 15.500 0-4.500 3.500-11.500 3.500-15.500 0z" fill="#dedede" stroke="#a2a2a2" stroke-width=".8"/><circle cx="11.200" cy="11" r="2.200" fill="#9a9a9a"/><path d="M2.500 15.500c5 2.500 12 2.500 17.500 0M4 18.500c4 1.800 10 1.800 14.500 0" fill="none" stroke="#b2b2b2" stroke-width=".9"/></svg><svg class="ic" style="left:1462px;top:95px" viewBox="0 0 24 24"><circle cx="9" cy="6.800" r="4.200" fill="#a0a0a0"/><circle cx="16.900" cy="7.500" r="4.700" fill="#a0a0a0"/><circle cx="9" cy="6.800" r="1.500" fill="#e0e0e0"/><circle cx="16.900" cy="7.500" r="1.800" fill="#e0e0e0"/><rect x="6.500" y="11.500" width="13" height="9.500" rx="1" fill="#a0a0a0"/><path d="M17 15l4.500-1.500c1.500 0 2 2 2 4s-.5 4.500-2 4.500L17 20.500z" fill="#a0a0a0"/><ellipse cx="21.500" cy="18" rx="1.500" ry="3.200" fill="#e0e0e0"/><rect x="9" y="13.500" width="4" height="3" fill="#e0e0e0"/><rect x="2.500" y="14" width="5.500" height="8.500" fill="#b4b4b4" stroke="#9a9a9a" stroke-width=".7"/><circle cx="5.200" cy="12.500" r="1.600" fill="#a8a8a8"/></svg><svg class="ic" style="left:1496px;top:95px" viewBox="0 0 24 24"><circle cx="9" cy="6.800" r="4.200" fill="#a0a0a0"/><circle cx="16.900" cy="7.500" r="4.700" fill="#a0a0a0"/><circle cx="9" cy="6.800" r="1.500" fill="#e0e0e0"/><circle cx="16.900" cy="7.500" r="1.800" fill="#e0e0e0"/><rect x="6.500" y="11.500" width="13" height="9.500" rx="1" fill="#a0a0a0"/><path d="M17 15l4.500-1.500c1.500 0 2 2 2 4s-.5 4.500-2 4.500L17 20.500z" fill="#a0a0a0"/><ellipse cx="21.500" cy="18" rx="1.500" ry="3.200" fill="#e0e0e0"/><rect x="9" y="13.500" width="4" height="3" fill="#e0e0e0"/><path d="M1 19l7-3.500" stroke="#9a9a9a" stroke-width="1.500"/></svg><svg class="ic" style="left:1530px;top:95px" viewBox="0 0 24 24"><path d="M.700 6.800H19.700L17.100 23.300 .700 16zM.700 6.800L17.100 23.300M19.700 6.800L.700 16M.700 6.800L18 13" fill="none" stroke="#a6a6a6" stroke-width="1.200" stroke-linejoin="round"/><path d="M19.700 3.500l2.600-1 .4 5-2.600 1z" fill="#9a9a9a"/></svg><svg class="ic" style="left:1564px;top:95px" viewBox="0 0 24 24"><path d="M.200 6.800H19.300L17.300 23.300 .900 15.400z" fill="#b9b9b9" stroke="#9a9a9a" stroke-width="1" stroke-linejoin="round"/><path d="M.200 6.800L17.300 23.300M19.300 6.800L.900 15.400" stroke="#9f9f9f" stroke-width=".9"/><path d="M.200 6.800H19.300L10 13z" fill="#a4a4a4"/><path d="M19.300 3.500l2.600-1 .4 5-2.600 1z" fill="#9a9a9a"/></svg><div class="vl" style="left:66px;top:128px;height:700px;background:#e2e2e2"></div><div class="abs" style="left:4px;top:169px;width:60px;height:2px;background:repeating-linear-gradient(90deg,#c4c4c4 0 2px,transparent 2px 4px)"></div><div class="hl" style="left:0px;top:245px;width:63px;background:#b4b4b4"></div><div class="hl" style="left:0px;top:424px;width:63px;background:#b4b4b4"></div><div class="hl" style="left:0px;top:533px;width:63px;background:#b4b4b4"></div><div class="hl" style="left:0px;top:643px;width:63px;background:#b4b4b4"></div><div class="hl" style="left:0px;top:754px;width:63px;background:#b4b4b4"></div><div class="hl" style="left:0px;top:828px;width:67px;background:#c6c6c6"></div><div class="sel" style="left:31px;top:464px;width:34px;height:33px"></div><svg class="ic" style="left:2px;top:179px" viewBox="0 0 24 24"><path d="M8 5.300V17.500L11.200 15 13.400 20.700 15.500 20 13.400 14.600 17 14.200z" fill="#000"/></svg><svg class="ic" style="left:36px;top:179px" viewBox="0 0 24 24"><path d="M1.200 4.900L14.100 1.400 23 7.100 20.500 17.500 8.300 23.900 3 11.700z" fill="#fafafa" stroke="#a9a9a9" stroke-width="1.500" stroke-linejoin="round"/><path d="M1.200 4.900L10 9.500 23 7.100M10 9.500L8.300 23.900M4 6.500l8 4 9-2M6 14l3 6 10-5.500M5 9.500l5 3 10-2.500M12 3l-1.500 6M3.500 8l6 3.500-.8 9M12 11.500l8.500-2-1.500 6.500-7.500 4z" fill="none" stroke="#acacac" stroke-width="1.300"/><path d="M13.500 12.500l5-1.200-.8 3.500-4.500 2.300zM6 9l3 1.600-.3 3z" fill="#fff"/></svg><svg class="ic" style="left:2px;top:213px" viewBox="0 0 24 24"><ellipse cx="18.700" cy="7" rx="2.800" ry="3.600" fill="none" stroke="#111" stroke-width="1" transform="rotate(-30 18.700 7)"/><path d="M7.300 3.500L13 2 20.900 12 20.200 17.800 14.400 22 7.300 18.500z" fill="#a3ab93" stroke="#111" stroke-width="1.200" stroke-linejoin="round"/><path d="M11 13.500L16 10.500 20.500 13 20 17.500 14.400 21.500 10 18.500z" fill="#dcdcb6" stroke="#222" stroke-width=".8"/><path d="M12.500 12.500l3.500 2.500v6" fill="none" stroke="#6a5a8a" stroke-width="1"/><path d="M7.300 3.500C9 2 12 1.800 13 2 15 5 13 9 11.600 11.300L7.300 8.500z" fill="#7f876f" stroke="#111" stroke-width=".9"/><path d="M-.6 14.900C2 11 5 9.500 7.300 8.500L11.600 11.300C8 13 5.500 15.500 5.200 17.800 5 20 4.500 22.500 3 23.500 1 24-.3 23-.6 22z" fill="#f2b212" stroke="#2a2208" stroke-width="1"/></svg><svg class="ic" style="left:36px;top:213px" viewBox="0 0 24 24"><path d="M13.300 14.200L23 3.500 21.200 8.500 11.900 24.600z" fill="#3a2a30"/><path d="M2.600 11.300L14 1.300 23 3.500 13.300 14.200z" fill="#f5a6ba" stroke="#2a1a20" stroke-width="1" stroke-linejoin="round"/><path d="M2.600 11.300L13.300 14.200 11.900 24.600 .500 18.500z" fill="#f17a9a" stroke="#2a1a20" stroke-width="1" stroke-linejoin="round"/><path d="M11 10l5-5.500" stroke="#b8506a" stroke-width="1.400"/></svg><svg class="ic" style="left:2px;top:255px" viewBox="0 0 24 24"><path d="M4.500 17.500L19 3.200C20.500 2 23.500 4.500 22.300 6.300L8 20.500z" fill="#b41a24" stroke="#3a0a10" stroke-width="1" stroke-linejoin="round"/><path d="M19 3.200l3.300 3.100" stroke="#e8c0c0" stroke-width="1.200"/><path d="M4.500 17.500L8 20.500 1.800 23.400z" fill="#d8c8a8" stroke="#2a2a2a" stroke-width=".8"/><path d="M1.800 23.400l2.300-1-1.400-1.200z" fill="#111"/></svg><svg class="ic" style="left:36px;top:255px" viewBox="0 0 24 24"><path d="M1.600 24C1.500 20 3 17 6.500 16.500c4-.5 6 4 9 5.500 3.500 1 5.500-2 5-5.500C20 12 15 9 9.500 8 5 7 2.500 5.500 4.500 4c3-2 9-1 13 .5 3.500 1.500 6 1.500 5.500-1C22.500 2 22 1.500 21.400 1.400" fill="none" stroke="#8c1a2a" stroke-width="1.500"/><circle cx="1.6" cy="23.5" r="1.5" fill="#c41a30"/><circle cx="21.4" cy="1.4" r="1.6" fill="#e0203a"/></svg><svg class="ic" style="left:2px;top:289px" viewBox="0 0 24 24"><rect x="3.400" y="2.800" width="16.600" height="19.400" fill="#8f8f82" stroke="#3a3a34" stroke-width="1"/><path d="M2.800 22.700L20 2.800" stroke="#e02a3c" stroke-width="2.200"/><path d="M2.800 22.700L20 2.800" stroke="#fde8e8" stroke-width=".9"/><circle cx="2.8" cy="22.7" r="1.6" fill="#c41a30"/><circle cx="20" cy="2.8" r="1.6" fill="#c41a30"/></svg><svg class="ic" style="left:36px;top:289px" viewBox="0 0 24 24"><rect x="3.700" y="2.800" width="16.100" height="19.400" fill="#8f8f82"/><path d="M3.700 2.800V22.200H19.800" fill="none" stroke="#e02a3c" stroke-width="1.300"/><path d="M3.700 7.500C12 7.500 19.800 13 19.800 22.200" fill="none" stroke="#f6c0c6" stroke-width="1.200"/><circle cx="3.7" cy="2.3" r="1.6" fill="#c41a30"/><circle cx="3.7" cy="7.7" r="1.6" fill="#c41a30"/><circle cx="3.7" cy="22.7" r="1.6" fill="#c41a30"/><circle cx="20.3" cy="22.7" r="1.6" fill="#c41a30"/></svg><svg class="ic" style="left:2px;top:323px" viewBox="0 0 24 24"><circle cx="11.900" cy="12.800" r="11" fill="#8f8f82" stroke="#2a2a26" stroke-width="1"/><path d="M11.900 12.800L20 4.800" stroke="#e02a3c" stroke-width="2"/><path d="M11.900 12.800L20 4.800" stroke="#fde0e0" stroke-width=".8"/><circle cx="11.900" cy="12.800" r="1.700" fill="#fbe6e6" stroke="#e02a3c" stroke-width=".9"/><circle cx="20" cy="4.8" r="1.6" fill="#c41a30"/></svg><svg class="ic" style="left:36px;top:323px" viewBox="0 0 24 24"><circle cx="11.700" cy="12.800" r="11" fill="none" stroke="#e02a3c" stroke-width=".9"/><path d="M1 11.800L7.500 3.200 20.300 5.300 22.500 16 11.200 23z" fill="#8f8f82" stroke="#2a2a26" stroke-width="1" stroke-linejoin="round"/><path d="M11.700 12.800L20.300 5.300" stroke="#e02a3c" stroke-width="2"/><path d="M11.700 12.800L20.300 5.300" stroke="#fde0e0" stroke-width=".8"/><circle cx="11.700" cy="12.800" r="1.700" fill="#fbe6e6" stroke="#e02a3c" stroke-width=".9"/><circle cx="20.3" cy="5.3" r="1.6" fill="#c41a30"/></svg><svg class="ic" style="left:2px;top:357px" viewBox="0 0 24 24"><path d="M22.100 3A19.300 19.300 0 012.800 22.400" fill="none" stroke="#1a1a1a" stroke-width="1.300"/><path d="M2.800 3H22.100L2.800 22.400" fill="none" stroke="#e02a3c" stroke-width="1"/><circle cx="2.8" cy="3" r="1.6" fill="#c41a30"/><circle cx="22.1" cy="3" r="1.6" fill="#c41a30"/><circle cx="2.8" cy="22.4" r="1.6" fill="#c41a30"/></svg><svg class="ic" style="left:36px;top:357px" viewBox="0 0 24 24"><path d="M6.400 22.400C1 17 .5 9 5.300 5.200 10 1 18 1.500 22.500 5.700" fill="none" stroke="#1a1a1a" stroke-width="1.400"/><path d="M22.500 5.700L6.400 22.400M5.300 5.200L14.400 14" fill="none" stroke="#e02a3c" stroke-width="1"/><circle cx="5.3" cy="5.2" r="1.6" fill="#c41a30"/><circle cx="22.5" cy="5.7" r="1.6" fill="#c41a30"/><circle cx="6.4" cy="22.4" r="1.6" fill="#c41a30"/></svg><svg class="ic" style="left:2px;top:391px" viewBox="0 0 24 24"><path d="M9.800 3.900C18 1.500 25.500 8 24 15 23 19.500 22 20.500 20.500 21.600M20.500 21.600C15 26 6 23 3.400 16.300" fill="none" stroke="#1a1a1a" stroke-width="1.300"/><path d="M9.800 3.900L20.500 21.600 3.400 16.300" fill="none" stroke="#e02a3c" stroke-width="1"/><circle cx="9.8" cy="3.9" r="1.6" fill="#c41a30"/><circle cx="3.4" cy="16.3" r="1.6" fill="#c41a30"/><circle cx="20.5" cy="21.6" r="1.6" fill="#c41a30"/></svg><svg class="ic" style="left:36px;top:391px" viewBox="0 0 24 24"><path d="M2.600 4.500H20.900A18.300 18.300 0 012.600 22.200z" fill="#8f8f82" stroke="#2a2a26" stroke-width=".9"/><path d="M2.600 22.200V4.500H20.900" fill="none" stroke="#e02a3c" stroke-width="1"/><path d="M20.900 4.500L2.600 22.200" stroke="#e02a3c" stroke-width="1.800"/><path d="M20.900 4.500L2.600 22.200" stroke="#fde0e0" stroke-width=".7"/><circle cx="2.6" cy="4.5" r="1.6" fill="#c41a30"/><circle cx="20.9" cy="4.5" r="1.6" fill="#c41a30"/><circle cx="2.6" cy="22.2" r="1.6" fill="#c41a30"/></svg><svg class="ic" style="left:2px;top:434px" viewBox="0 0 24 24"><path d="M11.900 .800L23.200 11.900 11.900 22.800 .700 11.900z" fill="#d8101e"/><path d="M11.900 .800L16.400 5.200 14 5.800V9.800H9.800V5.800L7.400 5.200z" fill="#d8101e" stroke="#8a0a12" stroke-width=".4"/><rect x="6.199999999999999" y="6.199999999999999" width="2.800" height="2.800" fill="#fdf4f4" transform="rotate(45 7.6 7.6)"/><rect x="14.799999999999999" y="6.199999999999999" width="2.800" height="2.800" fill="#fdf4f4" transform="rotate(45 16.2 7.6)"/><rect x="6.199999999999999" y="14.799999999999999" width="2.800" height="2.800" fill="#fdf4f4" transform="rotate(45 7.6 16.2)"/><rect x="14.799999999999999" y="14.799999999999999" width="2.800" height="2.800" fill="#fdf4f4" transform="rotate(45 16.2 16.2)"/><rect x="10.5" y="10.5" width="2.800" height="2.800" fill="#fdf4f4" transform="rotate(45 11.9 11.9)"/><path d="M9.700 9.700l4.400 4.400M14.100 9.700l-4.400 4.400" stroke="#fdf4f4" stroke-width="1.300"/></svg><svg class="ic" style="left:36px;top:434px" viewBox="0 0 24 24"><path d="M.500 13.200L11.700 8.300 23.500 13.200V16.500L11.700 22.300 .500 16.500z" fill="#6f6f64" stroke="#222" stroke-width="1" stroke-linejoin="round"/><path d="M.500 13.200L11.700 8.300 23.500 13.200 11.700 19z" fill="#8f8f82" stroke="#222" stroke-width="1" stroke-linejoin="round"/><path d="M11.700 1.400L16 8.300H14.400V13.500C13 14.500 10.500 14.500 9 13.500V8.300H7.500z" fill="#dc1424" stroke="#7a0a12" stroke-width=".7"/></svg><svg class="ic" style="left:2px;top:468px" viewBox="0 0 24 24"><path d="M2.500 10.500C3.500 5.500 9 2.200 14.500 3.500L15.500 1 22.500 7.500 14 10.200 14.800 7.300C11 6.500 7.500 8 6.500 11.500z" fill="#dc1424"/><path d="M21.500 13.500C20.500 18.500 15 21.800 9.500 20.500L8.500 23 1.500 16.500 10 13.800 9.200 16.700C13 17.500 16.500 16 17.500 12.500z" fill="#dc1424"/></svg><svg class="ic" style="left:36px;top:468px" viewBox="0 0 24 24"><path d="M5.800 22C2 19 .5 15 1 12.400 2 7 7 3.500 11.200 3.300 16 2.500 21 3 24 4.900L24.600 9.200 22 12.400C20 9.500 16 8 12.500 9 9 10.500 8 14 9.500 18.500z" fill="#8b8b80" stroke="#1e2a20" stroke-width="1.200" stroke-linejoin="round"/><path d="M4.500 12.500C6 8 10 5.500 14 5.500c3.500-.5 6.500 0 8.500 1.500L21 10.500C18 8 14 7 11 8.500 7.500 10 6.500 13.500 7 17z" fill="#c63440" stroke="#5a1218" stroke-width=".7"/><path d="M10 13.500L16 12l-1 2.500 4.500 1-5 4.500-.5-2.500-4 .5 2-2.500z" fill="#c63440" stroke="#5a1218" stroke-width=".7"/><path d="M22 5.500c1.500 1.500 1.500 4 0 6.500" fill="none" stroke="#d8d8cc" stroke-width="1.500"/></svg><svg class="ic" style="left:2px;top:502px" viewBox="0 0 24 24"><rect x="1.200" y="1" width="23" height="22" fill="#fdfdfd" stroke="#e02a3c" stroke-width=".9"/><rect x="1.200" y="6.300" width="17.700" height="16.700" fill="#8f8f82" stroke="#2a2a26" stroke-width=".9"/><path d="M24.300 .400L23 9 20.500 6.800 14.500 13.500 11.500 10.500 18 4.300 15.500 2z" fill="#dc1424" stroke="#7a0a12" stroke-width=".5"/></svg><svg class="ic" style="left:36px;top:502px" viewBox="0 0 24 24"><path d="M1 4.200C7-1 16-.5 20.500 5.500 24.500 11 23.500 18 20.300 23" fill="none" stroke="#e02a3c" stroke-width="1.400"/><path d="M3.700 12.800C6 8 12 7 15 10.500 17.500 13.500 16.500 17.500 13.900 20.300" fill="none" stroke="#2a3a3a" stroke-width="1.300"/><path d="M21.400 2.600L20.500 10.500 18.300 8.500 13.500 13.500 10.500 10.500 15.500 5.800 13.300 3.800z" fill="#dc1424" stroke="#7a0a12" stroke-width=".5"/></svg><svg class="ic" style="left:2px;top:543px" viewBox="0 0 24 24"><path d="M3.400 20.200L11.400 15.900 13 18.100 5 22.900z" fill="#e8dc28" stroke="#222" stroke-width=".9"/><path d="M2.500 20.500l2.500 3-1.500 1-2.300-2.800z" fill="#111"/><path d="M9.800 5.700L14.100 2.500H21.100L23.200 6.800 21.100 14.300 14.100 17 9.800 13.200z" fill="#1a1a1a" stroke="#111" stroke-width="1" stroke-linejoin="round"/><ellipse cx="17.800" cy="9.500" rx="3.600" ry="5.200" fill="#e2e02c" stroke="#6a6a10" stroke-width=".7" transform="rotate(15 17.800 9.500)"/><path d="M11.500 6.500v6" stroke="#777" stroke-width="1"/></svg><svg class="ic" style="left:36px;top:543px" viewBox="0 0 24 24"><path d="M4.200 15.400L12.300 22.900M14.400 5.200L21.900 12.700" stroke="#555" stroke-width="1"/><path d="M4.200 15.400L14.400 5.200" stroke="#111" stroke-width="1.300"/><path d="M2.700 14l3 2.800M5.700 14l-3 2.800M12.900 3.800l3 2.800M15.900 3.800l-3 2.800" stroke="#111" stroke-width="1.500"/><circle cx="12.3" cy="22.9" r="1.2" fill="#5aa85a"/><circle cx="21.9" cy="12.7" r="1.2" fill="#5aa85a"/><text x="3.500" y="8.500" font-size="8" font-family="Liberation Serif,serif" fill="#111" transform="rotate(-45 6 6)">5</text></svg><svg class="ic" style="left:2px;top:577px" viewBox="0 0 24 24"><path d="M22.700 3.900L6.600 22.700C2 20 .5 15 1.800 11.400 4 6.500 10 3.500 22.700 3.900z" fill="#e6dc2a" stroke="#2a2a10" stroke-width="1.300" stroke-linejoin="round"/><path d="M17 6.800L7.500 18C5 16 4.500 13.500 5.300 11.500 7 8.500 11 7 17 6.800z" fill="#f0f0f0" stroke="#2a2a10" stroke-width="1"/><path d="M3 13l1.500.5M3.500 10.500l1.500 1M5 8.500l1 1.200M7.500 6.800l.7 1.400M10.500 5.600l.4 1.500M14 5l.2 1.500M3.500 16l1.500-.5" stroke="#2a2a10" stroke-width=".7"/></svg><svg class="ic" style="left:36px;top:577px" viewBox="0 0 24 24"><path d="M7.500 9.800H4.800V19" fill="none" stroke="#777" stroke-width="1.400"/><path d="M2.500 18.500h4.600l-2.300 4.500z" fill="#111"/><rect x="7.500" y="2.300" width="16" height="14" fill="#fff" stroke="#111" stroke-width="1.100"/><text x="15.500" y="13.200" font-size="10.500" font-family="Liberation Serif,serif" text-anchor="middle" fill="#111">A1</text></svg><svg class="ic" style="left:2px;top:611px" viewBox="0 0 24 24"><path d="M9.800 13.900L3.500 10" stroke="#e05050" stroke-width="1" stroke-dasharray="1.200 1.200"/><path d="M9.800 13.900L3.500 18.500" stroke="#9ac89a" stroke-width="1" stroke-dasharray="1.200 1.200"/><path d="M9.800 13.900V22" stroke="#bdbdbd" stroke-width="1.800"/><path d="M9.800 13.900L18 9.500" stroke="#2e9a4a" stroke-width="1.400"/><path d="M20.500 8.200l-4 .2 1.600 2.800z" fill="#2e9a4a"/><path d="M9.800 13.900L18 18.800" stroke="#d82a2a" stroke-width="1.400"/><path d="M20.500 20.300l-3.800-.3 1.500-2.700z" fill="#d82a2a"/><path d="M9.800 13.900V6" stroke="#1a3a9a" stroke-width="2.400"/><path d="M9.800 2.200L12.300 7H7.300z" fill="#1a3a9a"/><circle cx="9.800" cy="13.900" r="1.600" fill="#111"/></svg><svg class="ic" style="left:36px;top:611px" viewBox="0 0 24 24"><path d="M1.600 16.600L8 2.500C9 1 11.500 1 12.500 2.500L21.900 21.500 21.900 23.600 17 23 14.500 17.500 8 15.500 6.500 18.500z" fill="#4a4a42" stroke="#1a1a18" stroke-width=".8" stroke-linejoin="round"/><path d="M8.500 3L10.500 2.500 19.500 22 17.500 22.500 14.500 16.500 7 14.500 5 18 3 17.500z" fill="#8f8f80"/><path d="M10 7l3 7-4.500-1.200z" fill="#f0f0f0" stroke="#1a1a18" stroke-width=".7"/></svg><svg class="ic" style="left:2px;top:653px" viewBox="0 0 24 24"><path d="M1.200 9.500C1.500 6.500 6 5 11 5.500L11 3.500 16 8 11 11.500 11 9.500C7 9 5 10 5 11.500 5.500 14 9 15 12 15V19C6 19.500 1.500 16 1.200 13z" fill="#c81622" stroke="#6a0a10" stroke-width=".6"/><path d="M12.500 5.500C18 4.500 23 7 22.900 10.500 22.500 15 19 17.500 15.500 18.500L16 21 11 17.500 15 13.500 15.300 15.500C17.500 14.500 19 13 19 11.500 19 9.500 16 8.800 12.500 9.200z" fill="#3aaa62" stroke="#1a6a38" stroke-width=".6"/><path d="M11.700 .900V24.500" stroke="#111" stroke-width="1.500"/></svg><svg class="ic" style="left:36px;top:653px" viewBox="0 0 24 24"><path d="M1 17.500C3 14 5.500 9 8 5.500 9 4 10.500 4.500 10.500 6L13 3.500C14 2.200 15.800 2.600 16 4L18 3C19.500 2.300 21 3.200 20.500 5L21.500 4.800C23 4.500 23.500 6 22.800 7.500L19 14 21.500 14.500C23.500 15 23 17.500 21 17.500L15.500 17.500C14 20 11 23.500 8 23.400z" fill="#f3e4bc" stroke="#4a4232" stroke-width="1" stroke-linejoin="round"/><path d="M10.500 6L8.500 10M16 4L12.500 10M20.500 5L16.500 11.500" stroke="#4a4232" stroke-width=".8" fill="none"/></svg><svg class="ic" style="left:2px;top:687px" viewBox="0 0 24 24"><path d="M11.4 12.7L2.5 22" stroke="#1c1c1c" stroke-width="3" stroke-linecap="round"/><circle cx="15.7" cy="8.2" r="5.9" fill="#a9c9ea" stroke="#1a2a3a" stroke-width="1.700"/><circle cx="14.7" cy="7.199999999999999" r="2.6550000000000002" fill="#c4daf2"/></svg><svg class="ic" style="left:36px;top:687px" viewBox="0 0 24 24"><rect x="2.600" y="3.400" width="20.400" height="19.800" fill="none" stroke="#e02444" stroke-width="1.500"/><path d="M11.1 12.7L2.3 21.5" stroke="#1c1c1c" stroke-width="3" stroke-linecap="round"/><circle cx="15.5" cy="8.2" r="6" fill="#a9c9ea" stroke="#1a2a3a" stroke-width="1.700"/><circle cx="14.5" cy="7.199999999999999" r="2.7" fill="#c4daf2"/></svg><svg class="ic" style="left:2px;top:721px" viewBox="0 0 24 24"><path d="M8.5 8.5L4.8 5.0" stroke="#c81622" stroke-width="2.200"/><path d="M1.8 2.1L6.9 2.8L2.8 7.2z" fill="#c81622"/><path d="M16.5 8.5L20.6 4.9" stroke="#c81622" stroke-width="2.200"/><path d="M23.8 2.1L22.6 7.1L18.7 2.6z" fill="#c81622"/><path d="M16.5 17.0L20.1 20.2" stroke="#c81622" stroke-width="2.200"/><path d="M23.2 23.0L18.1 22.4L22.1 18.0z" fill="#c81622"/><path d="M8.7 16.5L2.3 22.5" stroke="#1c1c1c" stroke-width="3" stroke-linecap="round"/><circle cx="12.5" cy="12.8" r="5" fill="#a9c9ea" stroke="#1a2a3a" stroke-width="1.700"/><circle cx="11.5" cy="11.8" r="2.25" fill="#c4daf2"/></svg><svg class="ic" style="left:36px;top:721px" viewBox="0 0 24 24"><path d="M10.9 14.2L9 12" stroke="#1c1c1c" stroke-width="3" stroke-linecap="round"/><circle cx="6.9" cy="9.6" r="5.8" fill="#a9c9ea" stroke="#1a2a3a" stroke-width="1.700"/><circle cx="5.9" cy="8.6" r="2.61" fill="#c4daf2"/><path d="M12.300 15L22.500 22.500" stroke="#2a3a4a" stroke-width="3.200" stroke-linecap="round"/><path d="M9 4.500L14 1V3.500C19 3 22.500 6 21.500 11L20 16 14.500 13.500C16.500 11 15.500 8.500 14 8.300V10.500z" fill="#1f86e6" stroke="#0e4c9c" stroke-width=".8" stroke-linejoin="round"/></svg><svg class="ic" style="left:2px;top:763px" viewBox="0 0 24 24"><circle cx="12.400" cy="3" r="1.500" fill="#fff" stroke="#111" stroke-width=".9"/><path d="M10.800 5.200H14C15.500 7 16 10 15.600 13L14.800 13 14.300 20H12.800L12.400 14 12 20H10.400L10 13 9.200 13C8.800 10 9.300 7 10.800 5.200z" fill="#fff" stroke="#111" stroke-width=".9"/><path d="M7 24l5-4.500 5 4.500M10 17.500l2 2 2-2" fill="none" stroke="#e02a3c" stroke-width="1.100"/></svg><svg class="ic" style="left:36px;top:763px" viewBox="0 0 24 24"><path d="M1.500 11.300C4 6.500 9 3.800 13 4.200 17 4.500 20 6 21.600 8.300" fill="none" stroke="#111" stroke-width="1.800"/><path d="M1.700 13.500C5 9 9 7.500 12 8 15.500 8.500 18 10 20.500 12.500 17 15.500 13 17 9.500 16.500 6 16 3.500 15 1.700 13.500z" fill="#fff" stroke="#222" stroke-width="1"/><circle cx="9.700" cy="12.300" r="3.700" fill="#111"/><circle cx="8.800" cy="11" r="1" fill="#fff"/><path d="M14 6.500C17 7 20 8.500 22 11M3 15.500C5 17.500 8 18.500 11 18.500M13 18c2.500-.5 5-1.500 7-3.500" fill="none" stroke="#9a9a9a" stroke-width="1.100"/><path d="M6 18.500v2.500M8.500 19v3M11 19v3M14 18.500V21" stroke="#c8c8c8" stroke-width=".8"/></svg><svg class="ic" style="left:2px;top:797px" viewBox="0 0 24 24"><ellipse cx="6" cy="11" rx="3.700" ry="5.700" fill="#111"/><ellipse cx="5.800" cy="20" rx="2.900" ry="3" fill="#111"/><path d="M2.800 16h6.200" stroke="#f0f0f0" stroke-width="1"/><g transform="rotate(22 16.500 13)"><ellipse cx="16.500" cy="8.500" rx="3.800" ry="5.800" fill="#111"/><ellipse cx="16.300" cy="18" rx="2.900" ry="3" fill="#111"/><path d="M13.200 13.800h6.400" stroke="#f0f0f0" stroke-width="1"/></g></svg><svg class="ic" style="left:36px;top:797px" viewBox="0 0 24 24"><path d="M12.500 3.400L22.300 13.300 12.500 22.700z" fill="#111"/><circle cx="11.300" cy="13.300" r="6.400" fill="#f6f6f6" stroke="#111" stroke-width="1.300"/><path d="M1.900 13.300H17" stroke="#8a8a8a" stroke-width="1.600"/></svg><div id="viewport"><svg width="1236" height="760" viewBox="0 0 1236 760" style="position:absolute;left:0;top:0"><polygon points="653.1,336.4 708.5,335.8 755.8,341.3 801.4,352.7 842.1,371.3 879.6,397.4 905.7,425.4 919.4,459.3 918.7,496.2 902.4,528.7 867.5,561.3 817.7,584.2 757.4,598.2 692.2,600.5 628.6,590.7 570.0,570.1 522.7,540.2 493.4,507.6 481.0,471.1 483.6,435.9 499.9,406.5 527.6,380.4 565.1,359.3 609.1,343.9" fill="#8b979f" stroke="#0a0a0a" stroke-width="1.6" stroke-linejoin="round"/></svg></div>
<div id="tray"><div id="traytitle"><span class="tx tt" style="left:4px;top:3px;font-size:11.500px;line-height:14px;color:#3a4d68">Default Tray</span><svg class="abs" style="left:253px;top:6px" width="8" height="9" viewBox="0 0 8 9"><rect x="2" y=".5" width="4" height="4.500" fill="#111"/><path d="M.5 5.200h7M4 5.500v3.500" stroke="#111" stroke-width="1.300" fill="none"/></svg><div class="abs" style="left:268px;top:3px;width:16px;height:14px;border:1px solid #8a3a38;border-radius:3px;background:linear-gradient(#eaa9a4,#cf5a52)"><svg class="abs" style="left:2px;top:2px" width="9" height="8" viewBox="0 0 9 8"><path d="M1 .5l6.500 7M7.500 .5L1 7.500" stroke="#fff" stroke-width="1.800"/></svg></div></div><div class="abs" style="left:269px;top:19px;width:10px;height:743px;background:#f0f0f0"></div><svg class="abs" style="left:273px;top:26px" width="8" height="6" viewBox="0 0 8 6"><path d="M0 5.5l4-4.5 4 4.5z" fill="#333"/></svg><div class="abs" style="left:269px;top:38px;width:12px;height:15px;border:1px solid #b4b4b4;background:linear-gradient(90deg,#f6f6f6,#dadada)"></div><svg class="abs" style="left:273px;top:752px" width="8" height="6" viewBox="0 0 8 6"><path d="M0 0.5l4 4.5 4-4.5z" fill="#333"/></svg><div class="hdr" style="top:18px"><svg style="left:7px;top:5px" width="10" height="9" viewBox="0 0 10 9"><path d="M1 1.5h8l-4 6z" fill="#111"/></svg><span class="t">Materials</span><div class="x"><svg style="left:2px;top:2px" width="7" height="7" viewBox="0 0 7 7"><path d="M1 1l5 5M6 1l-5 5" stroke="#222" stroke-width="1.3"/></svg></div></div><div class="abs" style="left:2px;top:39px;width:67px;height:71px;border:1px solid #b8b8b8;background:#fff"><svg class="abs" style="left:1px;top:1px" width="63" height="63" viewBox="0 0 63 63"><path d="M0 0L63 63H0z" fill="#98a7b3"/></svg></div><div class="abs" style="left:71px;top:39px;width:169px;height:19px;border:1px solid;border-color:#8e8e8e #e6e6e6 #e6e6e6 #8e8e8e;box-shadow:inset 1px 1px 0 #b9b9b9;background:#f0f0f0"><span class="tx" style="left:4px;top:2px;font-size:11px;line-height:13px;color:#6d6d6d">Default</span></div><svg class="abs" style="left:250px;top:41px" width="10" height="16" viewBox="0 0 10 16"><rect x=".5" y=".5" width="9" height="7" fill="#fff" stroke="#111" stroke-width="1"/><path d="M2 2.5h6l-3 3.5z" fill="#111"/><rect x="0" y="8" width="10" height="8" fill="#111"/><path d="M5 9.5v5M2.5 12h5" stroke="#fff" stroke-width="1.6"/></svg><svg class="abs" style="left:244px;top:62px" width="22" height="22" viewBox="0 0 22 22"><path d="M7 4l9-3 5 4v9l-9 4-5-4z" fill="#222"/><path d="M7 7l9-3M7 10l9-3M7 13l9-3" stroke="#ddd" stroke-width="1.3"/><circle cx="6" cy="16" r="4.6" fill="#fff" stroke="#111" stroke-width="1.3"/><path d="M6 13v6M3 16h6" stroke="#111" stroke-width="1.4"/></svg><div class="abs" style="left:244px;top:88px;width:22px;height:22px;background:#fff"><svg width="22" height="22" viewBox="0 0 22 22"><path d="M0 0L22 22H0z" fill="#98a7b3"/></svg></div><div class="abs" style="left:0;top:111px;width:268px;height:2px;border-top:1px solid #a9a9a9;border-bottom:1px solid #fff"></div><div class="abs" style="left:2px;top:119px;width:42px;height:20px;border-right:2px solid #8e8e8e;background:#f5f5f5"><span class="tx" style="left:4px;top:2px;font-size:11px;line-height:14px">Select</span></div><div class="abs" style="left:45px;top:121px;width:39px;height:17px;border-right:1px solid #8e8e8e"><span class="tx" style="left:2px;top:2px;font-size:11px;line-height:14px">Edit</span></div><div class="abs" style="left:0;top:139px;width:268px;height:1px;background:#fdfdfd"></div><svg class="abs" style="left:246px;top:115px" width="20" height="20" viewBox="0 0 20 20"><path d="M3 17l1.5-4 6-6 2.5 2.5-6 6z" fill="#d9a22c" stroke="#5a4a20" stroke-width=".8"/><path d="M10 5l5 5M11 6.5l3.5-3.5a1.8 1.8 0 012.5 2.5L13.500 9" stroke="#222" stroke-width="2.2" fill="none" stroke-linecap="round"/></svg><svg class="abs" style="left:7px;top:147px" width="14" height="14" viewBox="0 0 14 14"><path d="M1 7l6-5.500v3h5.500v5H7v3z" fill="#fafafa" stroke="#929292" stroke-width="1.2"/></svg><svg class="abs" style="left:31px;top:147px" width="14" height="14" viewBox="0 0 14 14"><path d="M13 7L7 1.500v3H1.500v5H7v3z" fill="#fafafa" stroke="#929292" stroke-width="1.2"/></svg><svg class="abs" style="left:53px;top:146px" width="18" height="18" viewBox="0 0 18 18"><path d="M1.500 9L9 1.800 16.500 9" stroke="#111" stroke-width="1.8" fill="none"/><path d="M3.500 8.500V16h11V8.500" fill="#fff" stroke="#111" stroke-width="1.600"/><rect x="7" y="10.500" width="4" height="5.500" fill="#111"/></svg><div class="abs" style="left:76px;top:146px;width:165px;height:22px;border:1px solid;border-color:#7d7d7d #dcdcdc #dcdcdc #7d7d7d;box-shadow:inset 1px 1px 0 #a0a0a0;background:#fff"><span class="tx" style="left:4px;top:5px;font-size:11px;line-height:13px;letter-spacing:-.12px">Asphalt and Concrete</span><div class="abs" style="right:1px;top:2px;width:15px;height:17px;background:#e6e6e6;border:1px solid;border-color:#fff #8a8a8a #8a8a8a #fff"><svg class="abs" style="left:3px;top:6px" width="8" height="5" viewBox="0 0 8 5"><path d="M0 0h8L4 4.500z" fill="#000"/></svg></div></div><svg class="abs" style="left:248px;top:145px" width="17" height="18" viewBox="0 0 17 18"><path d="M7 1l9 8-9 8z" fill="#111"/><rect x="1" y="4" width="7" height="10" fill="#fff" stroke="#2c3e78" stroke-width="1"/><rect x="1" y="4" width="7" height="2.500" fill="#2c3e78"/><path d="M2.500 7h4M2.500 9h4M2.500 11h4" stroke="#3a57a0" stroke-width=".8"/></svg><div class="abs" style="left:0;top:170px;width:268px;height:1px;background:#bdbdbd"></div><div class="abs" style="left:0;top:171px;width:268px;height:246px;background:#fff"></div><svg width="0" height="0" style="position:absolute"><defs><filter id="nz" x="0" y="0" width="100%" height="100%"><feTurbulence type="fractalNoise" baseFrequency="0.8" numOctaves="2" seed="3"/><feColorMatrix type="matrix" values="0 0 0 0 0.5  0 0 0 0 0.5  0 0 0 0 0.5  1.6 0 0 0 -0.55"/></filter><filter id="nz2" x="0" y="0" width="100%" height="100%"><feTurbulence type="fractalNoise" baseFrequency="0.08" numOctaves="3" seed="7"/><feColorMatrix type="matrix" values="0 0 0 0 1  0 0 0 0 1  0 0 0 0 1  1.4 0 0 0 -0.5"/></filter></defs></svg><div class="sw" style="left:3px;top:173px"><svg width="45" height="45" viewBox="0 0 45 45" style="display:block"><rect width="45" height="45" fill="#403a3e"/><rect width="45" height="45" filter="url(#nz)" opacity="0.18"/></svg></div><div class="sw" style="left:55px;top:173px"><svg width="45" height="45" viewBox="0 0 45 45" style="display:block"><rect width="45" height="45" fill="#1d1d1e"/><rect width="45" height="45" filter="url(#nz)" opacity="0.1"/></svg></div><div class="sw" style="left:107px;top:173px"><svg width="45" height="45" viewBox="0 0 45 45" style="display:block"><rect width="45" height="45" fill="#878c90"/><rect width="45" height="45" filter="url(#nz)" opacity="0.12"/></svg></div><div class="sw" style="left:159px;top:173px"><svg width="45" height="45" viewBox="0 0 45 45" style="display:block"><rect width="45" height="45" fill="#8e8f90"/><rect width="45" height="45" filter="url(#nz)" opacity="0.28"/></svg></div><div class="sw" style="left:211px;top:173px"><svg width="45" height="45" viewBox="0 0 45 45" style="display:block"><rect width="45" height="45" fill="#978d8f"/><rect width="45" height="45" filter="url(#nz)" opacity="0.45"/></svg></div><div class="sw" style="left:3px;top:225px"><svg width="45" height="45" viewBox="0 0 45 45" style="display:block"><rect width="45" height="45" fill="#b7bcb9"/><rect width="45" height="45" filter="url(#nz2)" opacity="0.35"/></svg></div><div class="sw" style="left:55px;top:225px"><svg width="45" height="45" viewBox="0 0 45 45" style="display:block"><rect x="0" y="0" width="2.2" height="45" fill="#6f6663"/><rect x="2" y="0" width="2.2" height="45" fill="#6f6663"/><rect x="4" y="0" width="1.2" height="45" fill="#b5ada9"/><rect x="5" y="0" width="1.7" height="45" fill="#6f6663"/><rect x="6.5" y="0" width="1.2" height="45" fill="#857a77"/><rect x="7.5" y="0" width="1.2" height="45" fill="#a89f9b"/><rect x="8.5" y="0" width="2.7" height="45" fill="#857a77"/><rect x="11.0" y="0" width="2.7" height="45" fill="#93898a"/><rect x="13.5" y="0" width="1.2" height="45" fill="#93898a"/><rect x="14.5" y="0" width="1.7" height="45" fill="#7a706d"/><rect x="16.0" y="0" width="1.7" height="45" fill="#b5ada9"/><rect x="17.5" y="0" width="2.2" height="45" fill="#857a77"/><rect x="19.5" y="0" width="2.7" height="45" fill="#857a77"/><rect x="22.0" y="0" width="1.2" height="45" fill="#857a77"/><rect x="23.0" y="0" width="2.7" height="45" fill="#857a77"/><rect x="25.5" y="0" width="1.7" height="45" fill="#7a706d"/><rect x="27.0" y="0" width="1.2" height="45" fill="#857a77"/><rect x="28.0" y="0" width="1.7" height="45" fill="#857a77"/><rect x="29.5" y="0" width="1.7" height="45" fill="#a89f9b"/><rect x="31.0" y="0" width="2.2" height="45" fill="#857a77"/><rect x="33.0" y="0" width="1.7" height="45" fill="#857a77"/><rect x="34.5" y="0" width="1.7" height="45" fill="#b5ada9"/><rect x="36.0" y="0" width="2.2" height="45" fill="#7a706d"/><rect x="38.0" y="0" width="2.2" height="45" fill="#b5ada9"/><rect x="40.0" y="0" width="1.7" height="45" fill="#857a77"/><rect x="41.5" y="0" width="2.2" height="45" fill="#7a706d"/><rect x="43.5" y="0" width="2.2" height="45" fill="#a89f9b"/><rect width="45" height="45" filter="url(#nz)" opacity="0.15"/></svg></div><div class="sw" style="left:107px;top:225px"><svg width="45" height="45" viewBox="0 0 45 45" style="display:block"><rect width="45" height="45" fill="#cacace"/><rect width="45" height="45" filter="url(#nz2)" opacity="0.45"/></svg></div><div class="sw" style="left:159px;top:225px"><svg width="45" height="45" viewBox="0 0 45 45" style="display:block"><rect width="45" height="45" fill="#e4e4e4"/><rect width="45" height="45" filter="url(#nz2)" opacity="0.5"/></svg></div><div class="abs" style="left:0;top:417px;width:268px;height:2px;background:#8a8a8a"></div><div class="hdr" style="top:421px"><svg style="left:7px;top:5px" width="10" height="9" viewBox="0 0 10 9"><path d="M2 0.5v8l6-4z" fill="#111"/></svg><span class="t">Components</span><div class="x"><svg style="left:2px;top:2px" width="7" height="7" viewBox="0 0 7 7"><path d="M1 1l5 5M6 1l-5 5" stroke="#222" stroke-width="1.3"/></svg></div></div><div class="hdr" style="top:440px"><svg style="left:7px;top:5px" width="10" height="9" viewBox="0 0 10 9"><path d="M2 0.5v8l6-4z" fill="#111"/></svg><span class="t">Styles</span><div class="x"><svg style="left:2px;top:2px" width="7" height="7" viewBox="0 0 7 7"><path d="M1 1l5 5M6 1l-5 5" stroke="#222" stroke-width="1.3"/></svg></div></div><div class="hdr" style="top:459px"><svg style="left:7px;top:5px" width="10" height="9" viewBox="0 0 10 9"><path d="M2 0.5v8l6-4z" fill="#111"/></svg><span class="t">Shadows</span><div class="x"><svg style="left:2px;top:2px" width="7" height="7" viewBox="0 0 7 7"><path d="M1 1l5 5M6 1l-5 5" stroke="#222" stroke-width="1.3"/></svg></div></div><div class="hdr" style="top:478px"><svg style="left:7px;top:5px" width="10" height="9" viewBox="0 0 10 9"><path d="M2 0.5v8l6-4z" fill="#111"/></svg><span class="t">Instructor</span><div class="x"><svg style="left:2px;top:2px" width="7" height="7" viewBox="0 0 7 7"><path d="M1 1l5 5M6 1l-5 5" stroke="#222" stroke-width="1.3"/></svg></div></div><div class="hdr" style="top:497px"><svg style="left:7px;top:5px" width="10" height="9" viewBox="0 0 10 9"><path d="M2 0.5v8l6-4z" fill="#111"/></svg><span class="t">Scenes</span><div class="x"><svg style="left:2px;top:2px" width="7" height="7" viewBox="0 0 7 7"><path d="M1 1l5 5M6 1l-5 5" stroke="#222" stroke-width="1.3"/></svg></div></div><div class="hdr" style="top:516px"><svg style="left:7px;top:5px" width="10" height="9" viewBox="0 0 10 9"><path d="M1 1.5h8l-4 6z" fill="#111"/></svg><span class="t">Layers</span><div class="x"><svg style="left:2px;top:2px" width="7" height="7" viewBox="0 0 7 7"><path d="M1 1l5 5M6 1l-5 5" stroke="#222" stroke-width="1.3"/></svg></div></div><svg class="abs" style="left:6px;top:539px" width="16" height="16" viewBox="0 0 16 16"><circle cx="8" cy="8" r="6.800" fill="#fff" stroke="#111" stroke-width="1.400"/><path d="M8 4v8M4 8h8" stroke="#111" stroke-width="1.800"/></svg><svg class="abs" style="left:30px;top:539px" width="16" height="16" viewBox="0 0 16 16"><circle cx="8" cy="8" r="6.800" fill="#f6f6f6" stroke="#8c8c8c" stroke-width="1.200"/><path d="M4.500 8h7" stroke="#8c8c8c" stroke-width="1.500"/></svg><svg class="abs" style="left:248px;top:538px" width="17" height="18" viewBox="0 0 17 18"><path d="M7 1l9 8-9 8z" fill="#111"/><rect x="1" y="4" width="7" height="10" fill="#fff" stroke="#2c3e78" stroke-width="1"/><rect x="1" y="4" width="7" height="2.500" fill="#2c3e78"/><path d="M2.500 7h4M2.500 9h4M2.500 11h4" stroke="#3a57a0" stroke-width=".8"/></svg><div class="abs" style="left:0px;top:561px;width:268px;height:17px;background:#f0f0f0;border-bottom:2px solid #858585;border-top:1px solid #fafafa"></div><span class="tx tt" style="left:5px;top:564px;font-size:11px;line-height:13px">Name</span><svg class="abs" style="left:47px;top:567px" width="8" height="7" viewBox="0 0 8 7"><path d="M0.500 0.500h6.500l-3 5.500z" fill="#f8f8f8" stroke="#a0a0a0" stroke-width=".9"/></svg><div class="abs" style="left:176px;top:562px;width:2px;height:15px;background:linear-gradient(90deg,#7d7d7d 50%,#fdfdfd 50%)"></div><span class="tx tt" style="left:183px;top:564px;font-size:11px;line-height:13px">Visible</span><div class="abs" style="left:226px;top:562px;width:2px;height:15px;background:linear-gradient(90deg,#7d7d7d 50%,#fdfdfd 50%)"></div><span class="tx tt" style="left:233px;top:564px;font-size:11px;line-height:13px">Color</span><div class="abs" style="left:266px;top:562px;width:2px;height:15px;background:linear-gradient(90deg,#7d7d7d 50%,#fdfdfd 50%)"></div><div class="abs" style="left:0;top:578px;width:268px;height:185px;background:#fff"></div><div class="col" style="top:581px;background:#f85252"></div><div class="rad" style="top:584px"><div class="abs" style="left:1px;top:1px;width:6px;height:6px;border-radius:50%;background:#000"></div></div><span class="lay" style="top:583px">Layer0</span><div class="chk" style="top:582px"><svg class="abs" style="left:0px;top:0px" width="9" height="9" viewBox="0 0 9 9"><path d="M1 4.500l2.500 2.800L8 1.500" stroke="#111" stroke-width="1.300" fill="none"/></svg></div><div class="col" style="top:598px;background:#1212e6"></div><div class="rad" style="top:601px"></div><span class="lay" style="top:600px">Meble</span><div class="chk" style="top:599px"><svg class="abs" style="left:0px;top:0px" width="9" height="9" viewBox="0 0 9 9"><path d="M1 4.500l2.500 2.800L8 1.500" stroke="#111" stroke-width="1.300" fill="none"/></svg></div><div class="col" style="top:615px;background:#1ef3f3"></div><div class="rad" style="top:618px"></div><span class="lay" style="top:617px">Okna</span><div class="chk" style="top:616px"><svg class="abs" style="left:0px;top:0px" width="9" height="9" viewBox="0 0 9 9"><path d="M1 4.500l2.500 2.800L8 1.500" stroke="#111" stroke-width="1.300" fill="none"/></svg></div><div class="col" style="top:632px;background:#ffff00"></div><div class="rad" style="top:635px"></div><span class="lay" style="top:634px">Sciany</span><div class="chk" style="top:633px"><svg class="abs" style="left:0px;top:0px" width="9" height="9" viewBox="0 0 9 9"><path d="M1 4.500l2.500 2.800L8 1.500" stroke="#111" stroke-width="1.300" fill="none"/></svg></div></div>
<div class="grip" style="left:0;top:893px;height:32px;width:1px"></div><span class="tx" style="left:10px;top:902px;font-size:11.500px;line-height:14px;font-family:'Liberation Sans',sans-serif">Distance</span><div class="abs" style="left:131px;top:898px;width:157px;height:22px;background:#f2f2f2"></div><div class="vl" style="left:291px;top:890px;height:38px;background:#bdbdbd"></div><div class="grip" style="left:296px;top:893px;height:32px"></div><div class="hl" style="left:0;top:927px;width:405px;background:#bdbdbd"></div><div class="vl" style="left:405px;top:890px;height:38px;background:#bdbdbd"></div><svg class="ic" style="left:307px;top:897px" viewBox="0 0 24 24"><circle cx="12" cy="12.300" r="11.300" fill="#fff" stroke="#111" stroke-width="1.300"/><path d="M12 -1v13.500M.700 12.300h22.600" stroke="#111" stroke-width="1.300"/><circle cx="12" cy="17.500" r="3.500" fill="#111"/><text x="12" y="19.600" font-size="5.500" font-weight="bold" text-anchor="middle" fill="#fff" font-family="Liberation Sans,sans-serif">N</text></svg><svg class="ic" style="left:341px;top:897px" viewBox="0 0 24 24"><path d="M-1 16.300h25" stroke="#e0505a" stroke-width="1.100"/><path d="M11.300 1v13" stroke="#3c9a48" stroke-width="1.100"/><path d="M12.500 16L19.200 1" stroke="#111" stroke-width="2.200"/><circle cx="12.300" cy="16.300" r="4.500" fill="#111"/><text x="12.300" y="18.800" font-size="6.500" font-weight="bold" font-style="italic" text-anchor="middle" fill="#fff" font-family="Liberation Sans,sans-serif">N</text></svg><svg class="ic" style="left:374px;top:897px" viewBox="0 0 24 24"><circle cx="12.500" cy="12.300" r="11" fill="#f4f4f4" stroke="#9a9a9a" stroke-width="1"/><path d="M12.500 1.300a11 11 0 0111 11" fill="none" stroke="#e03040" stroke-width="1.700"/><path d="M12.500 12.300h11" fill="none" stroke="#e03040" stroke-width="1.200"/><path d="M12.500 1.300v11" stroke="#111" stroke-width="1.900"/><circle cx="23" cy="14.800" r="1.400" fill="#e03040"/><rect x="2" y="15.500" width="11.700" height="7.300" fill="#fff" stroke="#111" stroke-width="1"/><text x="7.800" y="21.600" font-size="6" font-weight="bold" text-anchor="middle" fill="#111" font-family="Liberation Sans,sans-serif">60°</text></svg><svg class="abs" style="left:0px;top:933px" width="16" height="16" viewBox="0 0 16 16"><circle cx="8" cy="8" r="6.500" fill="#f4f4f4" stroke="#9c9c9c" stroke-width="1.200"/><path d="M8 3.500a2.700 2.700 0 012.700 2.700c0 2-2.700 6-2.700 6s-2.700-4-2.700-6A2.700 2.700 0 018 3.500z" fill="#a8a8a8"/></svg><svg class="abs" style="left:30px;top:933px" width="16" height="16" viewBox="0 0 16 16"><circle cx="8" cy="8" r="6.500" fill="#fff" stroke="#111" stroke-width="1.400"/><circle cx="8" cy="4.800" r="1.400" fill="#111"/><path d="M8 7v5" stroke="#111" stroke-width="2.400"/></svg><svg class="abs" style="left:60px;top:933px" width="16" height="16" viewBox="0 0 16 16"><circle cx="8" cy="8" r="6.500" fill="#e9e9e9" stroke="#9c9c9c" stroke-width="1.200"/><circle cx="8" cy="6" r="2.500" fill="#9c9c9c"/><path d="M3 12.500c1-3.500 9-3.500 10 0a6.500 6.500 0 01-10 0z" fill="#9c9c9c"/></svg><div class="abs" style="left:87px;top:937px;width:1px;height:9px;background:#9a9a9a"></div><span class="tx" style="left:98px;top:935px;font-size:12.500px;line-height:16px;font-family:'Liberation Sans',sans-serif">Select Type</span>
</body></html>
